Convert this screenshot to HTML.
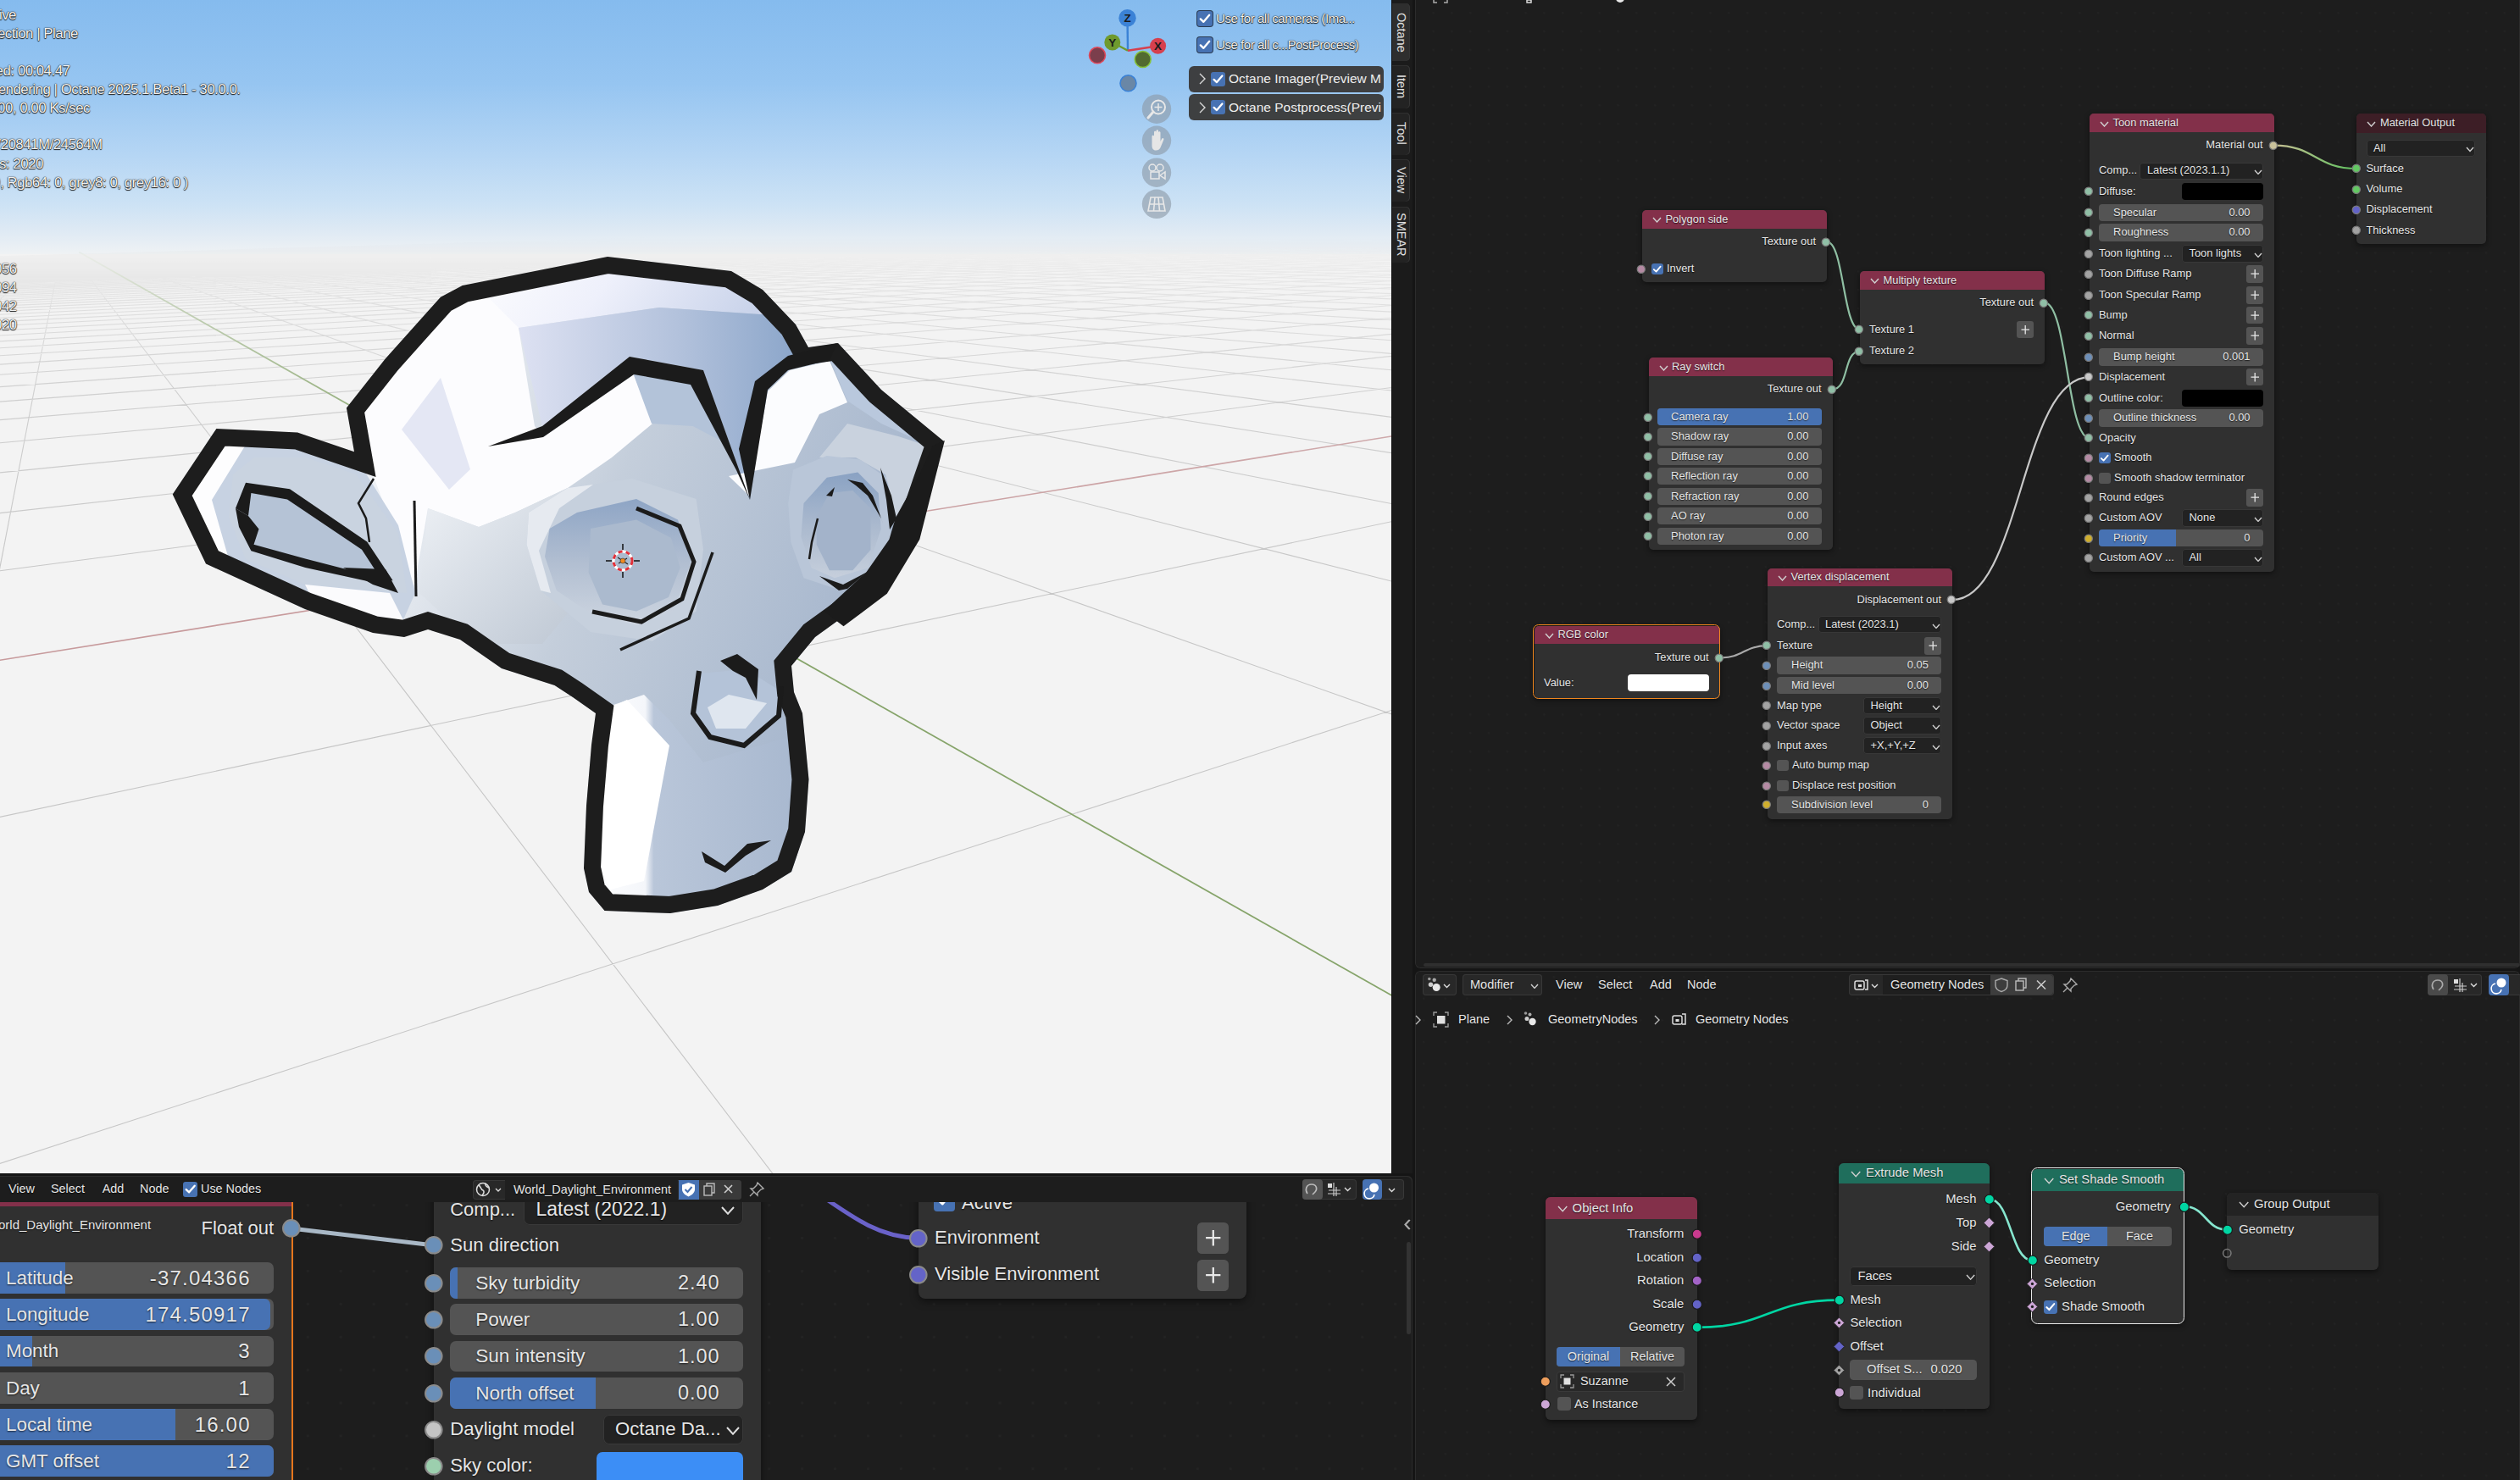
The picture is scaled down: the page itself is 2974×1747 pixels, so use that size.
<!DOCTYPE html><html><head><meta charset="utf-8"><style>
html,body{margin:0;padding:0;width:2974px;height:1747px;overflow:hidden;background:#151515;font-family:'Liberation Sans', sans-serif}
</style></head><body>
<div id="vp" style="position:absolute;left:0;top:0;width:1642px;height:1385px;overflow:hidden;background:#f3f3f3"><svg width="1642" height="1385" viewBox="0 0 1642 1385" style="position:absolute;left:0;top:0"><defs>
<linearGradient id="sky" gradientUnits="userSpaceOnUse" x1="0" y1="0" x2="0" y2="300">
 <stop offset="0" stop-color="#85bbee"/>
 <stop offset="0.33" stop-color="#96c5f1"/>
 <stop offset="0.6" stop-color="#b4d5f4"/>
 <stop offset="0.8" stop-color="#cce2f5"/>
 <stop offset="0.9" stop-color="#dde9f4"/>
 <stop offset="1" stop-color="#eff2f4"/>
</linearGradient>
<linearGradient id="gfade" gradientUnits="userSpaceOnUse" x1="0" y1="280" x2="0" y2="700">
 <stop offset="0" stop-color="#fff" stop-opacity="0"/>
 <stop offset="0.07" stop-color="#fff" stop-opacity="0.12"/>
 <stop offset="0.2" stop-color="#fff" stop-opacity="0.45"/>
 <stop offset="0.45" stop-color="#fff" stop-opacity="0.8"/>
 <stop offset="1" stop-color="#fff" stop-opacity="1"/>
</linearGradient>
<mask id="gmask"><rect x="0" y="0" width="1642" height="1385" fill="url(#gfade)"/></mask>
</defs><rect x="0" y="0" width="1642" height="1385" fill="#f3f3f3"/><rect x="0" y="0" width="1642" height="300" fill="url(#sky)"/><g mask="url(#gmask)"><path d="M-5977.2,604.9L-524.1,318.0M-5985.4,609.8L-505.9,317.5M-5994.1,615.1L-487.8,317.0M-5976.9,619.2L-469.9,316.5M-5985.8,625.0L-452.1,316.0M-5995.3,631.2L-434.5,315.4M-5976.5,636.2L-417.1,314.9M-5986.3,643.1L-399.8,314.4M-5996.8,650.6L-382.6,313.9M-5976.1,656.6L-365.6,313.5M-5986.9,665.1L-348.8,313.0M-5998.6,674.2L-332.1,312.5M-5975.6,681.7L-315.5,312.0M-5987.7,692.2L-299.1,311.5M-5962.4,701.0L-282.8,311.1M-5974.9,713.3L-266.6,310.6M-5988.6,726.8L-250.6,310.1M-5959.8,738.3L-234.7,309.7M-5974.0,754.3L-218.9,309.2M-5989.8,772.1L-203.3,308.8M-5956.4,787.7L-187.8,308.3M-5972.9,809.6L-172.4,307.9M-5991.5,834.2L-157.1,307.4M-5951.6,856.6L-142.0,307.0M-5971.2,888.1L-127.0,306.6M-5994.0,924.7L-112.1,306.1M-5944.5,959.1L-97.3,305.7M-5968.7,1008.6L-82.6,305.3M-5997.9,1068.4L-68.1,304.9M-5932.8,1127.8L-53.6,304.5M-5964.3,1217.0L-39.3,304.0M-5877.7,1310.4L-25.1,303.6M-5909.9,1457.9L-11.0,303.2M-5954.9,1664.6L3.0,302.8M-5806.4,1915.5L16.8,302.4M-5845.1,2391.7L30.6,302.0M-5920.2,3317.3L44.3,301.6M-5413.4,5248.1L57.8,301.2M-1322.2,7501.8L71.3,300.8M5305.0,7146.5L84.7,300.5M7774.1,3018.6L111.1,299.7M7757.7,2243.9L124.1,299.3M7748.2,1793.9L137.1,298.9M7742.0,1499.8L150.0,298.6M7963.4,1322.3L162.7,298.2M7930.3,1160.5L175.4,297.8M7904.9,1036.5L188.0,297.5M7299.8,889.6L200.5,297.1M6661.3,770.2L212.9,296.8M6211.0,686.0L225.2,296.4M5876.3,623.4L237.4,296.1M5617.8,575.1L249.6,295.7M5412.2,536.7L261.6,295.4M5244.7,505.3L273.6,295.0M5105.6,479.3L285.5,294.7M4988.2,457.4L297.2,294.3M4887.9,438.6L309.0,294.0M4801.2,422.4L320.6,293.7M4725.4,408.3L332.1,293.3M4658.7,395.8L343.6,293.0M4599.5,384.7L355.0,292.7M4546.5,374.8L366.3,292.3M4499.0,365.9L377.5,292.0M4456.0,357.9L388.6,291.7M4416.9,350.6L399.7,291.4M4381.3,343.9L410.7,291.0M4348.7,337.8L421.6,290.7M4318.7,332.2L432.5,290.4M4291.0,327.0L443.2,290.1M4265.4,322.3L453.9,289.8M4241.7,317.8L464.6,289.5M4219.5,313.7L475.1,289.2M4198.9,309.8L485.6,288.9M4179.6,306.2L496.0,288.6M4161.6,302.8L506.4,288.3M4144.6,299.7L516.7,288.0M4128.6,296.7L526.9,287.7M4113.6,293.9L537.0,287.4M4099.4,291.2L547.1,287.1M4086.0,288.7L557.1,286.8M4073.2,286.3L567.0,286.5M4061.2,284.1L576.9,286.3M4049.7,281.9L586.7,286.0M4038.8,279.9L596.5,285.7M4028.4,278.0L606.2,285.4M4018.6,276.1L615.8,285.1M4009.1,274.3L625.4,284.9M4000.1,272.7L634.9,284.6M3991.5,271.0L644.3,284.3M3983.2,269.5L653.7,284.0M3975.3,268.0L663.0,283.8M3967.7,266.6L672.3,283.5M3960.4,265.2L681.5,283.2M3953.5,263.9L690.6,283.0M3946.7,262.7L699.7,282.7M3940.3,261.5L708.8,282.4M3934.0,260.3L717.7,282.2M3928.0,259.2L726.7,281.9M3922.2,258.1L735.5,281.7M3916.7,257.1L744.4,281.4M3911.3,256.0L753.1,281.2M3906.1,255.1L761.8,280.9M3901.0,254.1L770.5,280.7M3896.2,253.2L779.1,280.4M3891.5,252.3L787.6,280.2M3886.9,251.5L796.1,279.9M3882.5,250.7L804.6,279.7M3878.2,249.9L813.0,279.4M3874.1,249.1L821.3,279.2M3870.0,248.3L829.6,279.0M3866.1,247.6L837.9,278.7M3862.3,246.9L846.1,278.5M3858.7,246.2L854.2,278.2M3855.1,245.5L862.3,278.0M3851.6,244.9L870.4,277.8M3848.2,244.3L878.4,277.6M3844.9,243.6L886.3,277.3M3841.7,243.0L894.3,277.1M3838.6,242.5L902.1,276.9M-1414.3,343.7L1416.7,262.0M-1431.6,344.4L1423.4,261.9M-1449.3,345.1L1430.2,261.8M-1467.5,345.8L1437.1,261.6M-1486.1,346.5L1444.1,261.5M-1505.1,347.2L1451.2,261.4M-1524.6,348.0L1458.3,261.3M-1544.6,348.7L1465.5,261.1M-1565.1,349.5L1472.7,261.0M-1586.1,350.3L1480.1,260.9M-1607.7,351.2L1487.5,260.7M-1629.8,352.0L1495.0,260.6M-1652.5,352.9L1502.6,260.4M-1675.8,353.8L1510.2,260.3M-1699.8,354.7L1518.0,260.2M-1724.5,355.6L1525.8,260.0M-1749.8,356.6L1533.7,259.9M-1775.9,357.6L1541.7,259.7M-1802.7,358.6L1549.8,259.6M-1830.3,359.7L1558.0,259.4M-1858.7,360.8L1566.2,259.3M-1888.0,361.9L1574.6,259.1M-1918.2,363.1L1583.1,259.0M-1949.3,364.3L1591.6,258.8M-1981.4,365.5L1600.2,258.7M-2014.6,366.8L1609.0,258.5M-2048.9,368.1L1617.8,258.3M-2084.2,369.5L1626.8,258.2M-2120.8,370.9L1635.8,258.0M-2158.7,372.3L1645.0,257.8M-2197.9,373.8L1654.3,257.7M-2238.4,375.4L1663.6,257.5M-2280.5,377.0L1673.1,257.3M-2324.1,378.7L1682.7,257.1M-2369.4,380.4L1692.5,257.0M-2416.4,382.2L1702.3,256.8M-2465.2,384.1L1712.3,256.6M-2516.0,386.0L1722.3,256.4M-2568.9,388.1L1732.5,256.2M-2624.0,390.2L1742.9,256.0M-2681.4,392.4L1753.3,255.9M-2741.3,394.7L1763.9,255.7M-2803.9,397.1L1774.7,255.5M-2869.3,399.6L1785.5,255.3M-2937.8,402.2L1796.5,255.1M-3009.5,405.0L1807.7,254.9M-3084.7,407.9L1819.0,254.7M-3163.7,410.9L1830.4,254.4M-3246.8,414.1L1842.0,254.2M-3334.2,417.5L1853.8,254.0M-3426.4,421.0L1865.7,253.8M-3523.6,424.7L1877.7,253.6M-3626.4,428.7L1890.0,253.4M-3735.3,432.9L1902.3,253.1M-3850.8,437.3L1914.9,252.9M-3973.5,442.0L1927.6,252.7M-4104.1,447.0L1940.6,252.4M-4243.5,452.4L1953.7,252.2M-4392.4,458.1L1966.9,251.9M-4552.0,464.2L1980.4,251.7M-4723.4,470.8L1994.1,251.5M-4908.0,477.9L2007.9,251.2M-5107.4,485.6L2022.0,250.9M-5323.4,493.9L2036.3,250.7M-5558.2,502.9L2050.8,250.4M-5814.4,512.7L2065.5,250.1M-5966.6,519.2L2080.4,249.9M-5997.8,521.7L2095.5,249.6M-5986.3,522.8L2110.9,249.3M-5974.3,524.0L2126.5,249.0M-5962.0,525.2L2142.3,248.7M-5995.5,528.0L2158.4,248.4M-5983.0,529.4L2174.8,248.1M-5970.1,530.7L2191.4,247.8M-5956.7,532.2L2208.3,247.5M-5992.8,535.4L2225.4,247.2M-5979.3,537.0L2242.8,246.9M-5965.2,538.6L2260.5,246.6M-5950.5,540.3L2278.5,246.3M-5989.7,544.1L2296.8,245.9M-5974.8,546.0L2315.4,245.6M-5959.3,548.0L2334.3,245.2M-5943.1,550.0L2353.6,244.9M-5985.9,554.4L2373.1,244.5M-5969.5,556.8L2393.0,244.2M-5952.3,559.2L2413.3,243.8M-5998.8,564.3L2433.9,243.4M-5981.4,567.1L2454.9,243.0M-5963.0,570.0L2476.2,242.6M-5943.6,573.1L2498.0,242.2M-5995.4,579.2L2520.1,241.8M-5975.7,582.8L2542.6,241.4M-5954.8,586.5L2565.6,241.0M-5932.7,590.5L2589.0,240.6M-5991.0,598.2L2612.8,240.1M-5968.4,602.8L2637.1,239.7M-5944.3,607.8L2661.9,239.2M-5918.5,613.1L2687.1,238.8M-5985.2,623.0L2712.9,238.3M-5958.8,629.4L2739.1,237.8M-5930.3,636.2L2765.9,237.3M-5899.4,643.6L2793.2,236.8M-5977.3,657.0L2821.1,236.3M-5945.5,666.1L2849.6,235.8M-5910.6,676.0L2878.6,235.3M-5872.3,687.0L2908.3,234.7M-5965.9,706.2L2938.6,234.2M-5925.8,720.2L2969.6,233.6M-5881.0,735.9L3001.2,233.0M-5994.9,763.1L3033.6,232.4M-5947.9,784.1L3066.7,231.8M-5894.0,808.2L3100.5,231.2M-5831.6,836.0L3135.1,230.6M-5982.5,884.6L3170.4,229.9M-5915.0,925.8L3206.6,229.3M-5833.2,975.8L3243.7,228.6M-5732.0,1037.6L3281.7,227.9M-5955.3,1151.0L3320.6,227.2M-5836.6,1264.0L3360.4,226.5M-5671.8,1420.9L3401.2,225.7M-5847.5,2205.9L3486.0,224.2M-5403.0,3133.6L3530.0,223.4M-3956.9,6151.2L3575.2,222.5" stroke="#c6c6c6" stroke-width="1.1" fill="none"/><path d="M-5427.9,1653.1L3443.1,225.0" stroke="#c79a9c" stroke-width="1.6" fill="none"/><path d="M7410.6,4442.4L93.3,297.5" stroke="#86a46a" stroke-width="1.8" fill="none"/></g><defs><clipPath id="mclip"><polygon points="717,303 863,320 900,342 939,383 954,410 989,405 1040,460 1114,521 1097,570 1080,620 1071,645 1045,692 962,752 934,786 937,817 947,842 954.5,920 950,982 934,1029 900,1050 847,1069 791,1078 713.5,1075 695,1053 689,1025 692,951 698,879 703,842 676,823 654.5,809 592,789 543,755 505,743 477,752 440,747 360,719 243,665.5 203.7,583.4 255.4,505.9 351.1,510.4 418,533.2 408.9,481.5 454.5,423.8 519.9,350.8 545.7,337.1"/></clipPath><linearGradient id="mface" gradientUnits="userSpaceOnUse" x1="480" y1="520" x2="1060" y2="760">
<stop offset="0" stop-color="#eef1f5"/><stop offset="0.4" stop-color="#c4cedb"/><stop offset="1" stop-color="#a2b3cb"/></linearGradient>
<linearGradient id="mtop" x1="0" y1="0" x2="1" y2="0.2">
<stop offset="0" stop-color="#ffffff"/><stop offset="0.5" stop-color="#eef0fb"/><stop offset="1" stop-color="#c9d3ea"/></linearGradient>
<linearGradient id="mband" x1="0" y1="0" x2="1" y2="0">
<stop offset="0" stop-color="#dde1f2"/><stop offset="0.5" stop-color="#b3c2dc"/><stop offset="1" stop-color="#7f9dc4"/></linearGradient>
<linearGradient id="mchin" x1="0" y1="0" x2="1" y2="0">
<stop offset="0" stop-color="#ffffff"/><stop offset="0.28" stop-color="#f4f6fa"/><stop offset="0.32" stop-color="#b9c6d9"/><stop offset="1" stop-color="#a8b8cf"/></linearGradient>
<linearGradient id="meye" x1="0" y1="0" x2="0" y2="1"><stop offset="0" stop-color="#8ea5c5"/><stop offset="0.5" stop-color="#b1bed1"/><stop offset="1" stop-color="#cdd5e0"/></linearGradient>
<linearGradient id="meye2" x1="0" y1="0" x2="0" y2="1"><stop offset="0" stop-color="#8aa2c3"/><stop offset="0.5" stop-color="#aab9ce"/><stop offset="1" stop-color="#c6cfdc"/></linearGradient>
<linearGradient id="mcheek" gradientUnits="userSpaceOnUse" x1="510" y1="600" x2="690" y2="790">
<stop offset="0" stop-color="#e9edf2"/><stop offset="1" stop-color="#b9c3d0"/></linearGradient>
</defs><g clip-path="url(#mclip)"><polygon points="717,303 863,320 900,342 939,383 954,410 989,405 1040,460 1114,521 1097,570 1080,620 1071,645 1045,692 962,752 934,786 937,817 947,842 954.5,920 950,982 934,1029 900,1050 847,1069 791,1078 713.5,1075 695,1053 689,1025 692,951 698,879 703,842 676,823 654.5,809 592,789 543,755 505,743 477,752 440,747 360,719 243,665.5 203.7,583.4 255.4,505.9 351.1,510.4 418,533.2 408.9,481.5 454.5,423.8 519.9,350.8 545.7,337.1" fill="url(#mface)"/><polygon points="530,330 717,318 863,333 912,372 778,363 612,387 560,420" fill="url(#mtop)"/><polygon points="425,500 454,424 520,351 560,335 612,387 631,503 641,516 748,442 770,500 722,540 670,576 608,605 565,622 505,600 489,692 470,640 440,560" fill="#fcfcfe"/><polygon points="520,446 555,554 530,578 474,507" fill="#e4e7f4"/><polygon points="505,600 565,622 608,605 670,576 700,600 690,700 640,760 560,760 495,700" fill="url(#mcheek)"/><polygon points="747.7,442 830,450 850,520 817.7,503 769,500" fill="#b3c3d9"/><polygon points="612,387 778,363 912,372 942,425 985,412 930,437 906,460 885,590 830,437 743,421 640,503" fill="url(#mband)"/><polygon points="906,462 932,437 979,426 1000,475 967,489 938,546 860,562 884,585" fill="#fbfcfe"/><polygon points="980,425 1000,473 1040,500 1095,525 1040,462" fill="#b9c8dd"/><polygon points="700,840 760,820 790,850 830,900 930,870 945,950 940,1030 860,1060 720,1065 690,1000" fill="url(#mchin)"/><polygon points="710,840 740,826 790,880 760,1040 720,1050 700,1000" fill="#ffffff"/><polygon points="210,580 262,510 350,515 420,540 470,620 490,700 470,745 360,720 245,665" fill="#c7d2e2"/><polygon points="222,585 262,520 290,525 250,590 270,660 245,655" fill="#fdfdfe"/><polygon points="275,560 300,540 360,540 420,560 470,630 480,700 360,690 290,660 270,610" fill="#c9d3e0"/><polygon points="285,590 300,576 340,584 430,645 455,686 360,664 300,645" fill="#b5c3d6"/><polygon points="360,690 460,700 480,740 380,730" fill="#fbfbfd"/><polygon points="624,605 670,576 746,565 821.6,589 830,648.6 821.6,721.6 770,756.8 697,746 638,697 621.6,643" fill="#c6d0dd"/><polygon points="624,605 670,576 700,572 660,600 636,650 650,700 638,697 621.6,643" fill="#e6eaf0"/><polygon points="648.6,624 681,605 751,589 800,613.5 816,662 794.6,721.6 751,738 697,724 656.8,697 643,657" fill="url(#meye)"/><polygon points="697,624 751,613.5 792,635 802.7,670 789,705 751,721.6 711,713.5 694.6,675.7" fill="#abbace"/><polygon points="1000,500 1060,515 1100,528 1080,580 1058,612 1045,560 1010,540 967,540" fill="#c9d2de"/><polygon points="936,554.6 975.8,537.9 1015,542.4 1045.8,563.7 1051.9,639.8 1030.6,682.3 985,694.5 948.5,682.3 933.3,639.8 930.2,594" fill="#b9c6d8"/><polygon points="948.5,594 975.8,563.7 1012.3,557.6 1036.7,582 1039.7,624.6 1024.5,670.2 985,682.3 957.6,670.2 945.4,633.7" fill="url(#meye2)"/><polygon points="963.7,609.3 978.9,582 1006.3,579 1027.5,600.2 1027.5,648.9 1006.3,673.2 978.9,673.2 963.7,642.8" fill="#a3b3ca"/><polygon points="825,795 880,790 920,815 918,845 878,878 838,868 818,842" fill="#b4c3d8"/><polygon points="835,835 860,820 905,830 880,860 845,860" fill="#dfe6ef"/><polygon points="717,303 863,320 900,342 939,383 954,410 989,405 1040,460 1114,521 1097,570 1080,620 1071,645 1045,692 962,752 934,786 937,817 947,842 954.5,920 950,982 934,1029 900,1050 847,1069 791,1078 713.5,1075 695,1053 689,1025 692,951 698,879 703,842 676,823 654.5,809 592,789 543,755 505,743 477,752 440,747 360,719 243,665.5 203.7,583.4 255.4,505.9 351.1,510.4 418,533.2 408.9,481.5 454.5,423.8 519.9,350.8 545.7,337.1" fill="none" stroke="#1d1d1d" stroke-width="40" stroke-linejoin="miter" stroke-miterlimit="3"/></g><polygon points="576,527 640,503 743,421 830,437 885,590 869,555 815,454 748,442 641,516" fill="#1b1b1b"/><polygon points="885,590 872,530 891,450 930,420 988,405 979,425 930,437 906,460" fill="#1b1b1b"/><polyline points="751,600 802,621 819,663 805,707 757,734 699,722" fill="none" stroke="#1b1b1b" stroke-width="5"/><polyline points="841,652 813,730 732,767" fill="none" stroke="#1b1b1b" stroke-width="3.5"/><polygon points="1100.7,526.3 1114.9,519.9 1085.3,636.7 1046.8,700.8 995.5,739.3 972.4,721.4 1022.5,675.2 1049.4,636.7 1057,611 1085.3,559.7" fill="#1b1b1b"/><polygon points="1039,552 1052,585 1058,612 1050,625 1046,590" fill="#1b1b1b"/><polygon points="1000,566 1018,570 1030,585 1043,620 1040,612 1024,585 1010,573" fill="#1b1b1b"/><polygon points="967,680 995,690 1023.7,675 1000,695 990,697" fill="#1b1b1b"/><polyline points="965,612 958,640 955,660" fill="none" stroke="#1b1b1b" stroke-width="2.5"/><polygon points="975,585 985,575 982,586" fill="#1b1b1b"/><polyline points="825,792 818,842 838,870 878,880 919,845 922,810" fill="none" stroke="#1b1b1b" stroke-width="6"/><polygon points="850,780 870,772 895,790 893,826 880,800 865,792" fill="#1b1b1b"/><polygon points="828,1005 855,1022 882,996 910,992 880,1010 856,1030 832,1018" fill="#1b1b1b"/><polygon points="278,600 290,569.7 342,577.3 433.2,639.6 463.6,685.3 450,684 427,648.8 339,589.5 296.4,581.9 293,609" fill="#1b1b1b"/><polygon points="278,600 293,609 305.5,624.4 299.5,642.7 360.3,659.4 448.4,682.2 463.6,690 457.6,691.3 360.3,670 296.4,650.3 282,622" fill="#1b1b1b"/><polyline points="441,565 423,594 432,612 436,640" fill="none" stroke="#1b1b1b" stroke-width="2.5"/><polygon points="405,670 455,672 470,700 440,690" fill="#1b1b1b"/><polyline points="489,591 491,704" fill="none" stroke="#1b1b1b" stroke-width="3"/><polyline points="652,809 700,830 760,838" fill="none" stroke="#1b1b1b" stroke-width="0"/><circle cx="735" cy="662" r="11" fill="none" stroke="#fff" stroke-width="3"/><circle cx="735" cy="662" r="11" fill="none" stroke="#e0303a" stroke-width="3" stroke-dasharray="5 4.2"/><path d="M715,662H722M748,662H755M735,642V649M735,675V682" stroke="#111" stroke-width="1.5"/><path d="M729,658L741,666M730,665L740,659" stroke="#222" stroke-width="1.2"/><circle cx="735" cy="662" r="3" fill="#f08a20" stroke="#333" stroke-width="0.6"/><line x1="1331" y1="59.8" x2="1330.5" y2="21.3" stroke="#3b82d6" stroke-width="2.4"/><line x1="1331" y1="59.8" x2="1312.8" y2="50" stroke="#6f9a2e" stroke-width="2.4"/><line x1="1331" y1="59.8" x2="1366.6" y2="54.3" stroke="#d6404e" stroke-width="2.4"/><circle cx="1295" cy="65.3" r="9.5" fill="#7b3e4c" stroke="#e0485a" stroke-width="1.6"/><circle cx="1348.7" cy="70" r="9.5" fill="#526a30" stroke="#86c23a" stroke-width="1.6"/><circle cx="1331.5" cy="98.3" r="9.5" fill="#6a87a6" stroke="#3b82d6" stroke-width="1.6"/><circle cx="1330.5" cy="21.3" r="10.2" fill="#3b82d6"/><circle cx="1312.8" cy="50" r="9.5" fill="#6f9a2e"/><circle cx="1366.6" cy="54.3" r="9.5" fill="#d6404e"/><text x="1330.5" y="26.3" text-anchor="middle" font-family="'Liberation Sans', sans-serif" font-size="13.5" font-weight="bold" fill="#1a1a1a">Z</text><text x="1312.8" y="55" text-anchor="middle" font-family="'Liberation Sans', sans-serif" font-size="13.5" font-weight="bold" fill="#1a1a1a">Y</text><text x="1366.6" y="59.3" text-anchor="middle" font-family="'Liberation Sans', sans-serif" font-size="13.5" font-weight="bold" fill="#1a1a1a">X</text><circle cx="1365" cy="128.7" r="17.2" fill="#8c9aa6" fill-opacity="0.62"/><circle cx="1365" cy="165.8" r="17.2" fill="#8c9aa6" fill-opacity="0.62"/><circle cx="1365" cy="203.7" r="17.2" fill="#8c9aa6" fill-opacity="0.62"/><circle cx="1365" cy="240.8" r="17.2" fill="#8c9aa6" fill-opacity="0.62"/><circle cx="1367" cy="126.5" r="8" fill="none" stroke="#e8e8e8" stroke-width="2"/><path d="M1361,132 L1355,139" stroke="#e8e8e8" stroke-width="3" stroke-linecap="round"/><path d="M1367,122V131M1362.5,126.5H1371.5" stroke="#e8e8e8" stroke-width="1.5"/><path d="M1359.5,170 V161 C1359.5,159.3 1362,159.3 1362,161 V167 V156 C1362,154.3 1364.5,154.3 1364.5,156 V166 V154.5 C1364.5,152.8 1367,152.8 1367,154.5 V166 V156.5 C1367,154.8 1369.5,154.8 1369.5,156.5 V167 L1371,164 C1372,162.3 1374,163.3 1373.3,165 L1370,173 C1369,176 1367,177.5 1364,177.5 C1361,177.5 1359.5,175 1359.5,172 Z" fill="#e6e6e6"/><circle cx="1360" cy="198" r="4" fill="none" stroke="#e8e8e8" stroke-width="1.5"/><circle cx="1369" cy="198" r="4" fill="none" stroke="#e8e8e8" stroke-width="1.5"/><rect x="1358" y="203" width="10" height="8" fill="none" stroke="#e8e8e8" stroke-width="1.5"/><path d="M1369,207 L1375,203 V211Z" fill="none" stroke="#e8e8e8" stroke-width="1.5"/><path d="M1358,233 H1372 L1375,249 H1355 Z M1356.5,241 H1373.5 M1363,233 L1361.5,249 M1367,233 L1368.5,249" fill="none" stroke="#e8e8e8" stroke-width="1.6"/></svg><div style="position:absolute;white-space:nowrap;font-family:'Liberation Sans', sans-serif;font-size:16.8px;letter-spacing:-0.45px;color:#f2f2f2;text-shadow:0 0 1px #1a1a1a,0 0 1.5px #1a1a1a,0 1px 1px #222;right:1623px;top:8px;line-height:20px">Octane | Interactive</div><div style="position:absolute;white-space:nowrap;font-family:'Liberation Sans', sans-serif;font-size:16.8px;letter-spacing:-0.45px;color:#f2f2f2;text-shadow:0 0 1px #1a1a1a,0 0 1.5px #1a1a1a,0 1px 1px #222;right:1550px;top:29.700000000000003px;line-height:20px">Scene Collection | Plane</div><div style="position:absolute;white-space:nowrap;font-family:'Liberation Sans', sans-serif;font-size:16.8px;letter-spacing:-0.45px;color:#f2f2f2;text-shadow:0 0 1px #1a1a1a,0 0 1.5px #1a1a1a,0 1px 1px #222;right:1559.5px;top:73.5px;line-height:20px">Elapsed: 00:04.47</div><div style="position:absolute;white-space:nowrap;font-family:'Liberation Sans', sans-serif;font-size:16.8px;letter-spacing:-0.45px;color:#f2f2f2;text-shadow:0 0 1px #1a1a1a,0 0 1.5px #1a1a1a,0 1px 1px #222;right:1358.5px;top:95.7px;line-height:20px">Rendering | Octane 2025.1.Beta1 - 30.0.0.</div><div style="position:absolute;white-space:nowrap;font-family:'Liberation Sans', sans-serif;font-size:16.8px;letter-spacing:-0.45px;color:#f2f2f2;text-shadow:0 0 1px #1a1a1a,0 0 1.5px #1a1a1a,0 1px 1px #222;right:1536px;top:118px;line-height:20px">Samples: 500/500, 0.00 Ks/sec</div><div style="position:absolute;white-space:nowrap;font-family:'Liberation Sans', sans-serif;font-size:16.8px;letter-spacing:-0.45px;color:#f2f2f2;text-shadow:0 0 1px #1a1a1a,0 0 1.5px #1a1a1a,0 1px 1px #222;right:1521.4px;top:161.4px;line-height:20px">GPU: 1/20841M/24564M</div><div style="position:absolute;white-space:nowrap;font-family:'Liberation Sans', sans-serif;font-size:16.8px;letter-spacing:-0.45px;color:#f2f2f2;text-shadow:0 0 1px #1a1a1a,0 0 1.5px #1a1a1a,0 1px 1px #222;right:1591.2px;top:183.7px;line-height:20px">Triangles: 2020</div><div style="position:absolute;white-space:nowrap;font-family:'Liberation Sans', sans-serif;font-size:16.8px;letter-spacing:-0.45px;color:#f2f2f2;text-shadow:0 0 1px #1a1a1a,0 0 1.5px #1a1a1a,0 1px 1px #222;right:1420px;top:206px;line-height:20px">Textures: ( Rgba32: 0, Rgb64: 0, grey8: 0, grey16: 0 )</div><div style="position:absolute;white-space:nowrap;font-family:'Liberation Sans', sans-serif;font-size:16.8px;letter-spacing:-0.45px;color:#f2f2f2;text-shadow:0 0 1px #1a1a1a,0 0 1.5px #1a1a1a,0 1px 1px #222;right:1622.3px;top:307.5px;line-height:20px">Objects 1056</div><div style="position:absolute;white-space:nowrap;font-family:'Liberation Sans', sans-serif;font-size:16.8px;letter-spacing:-0.45px;color:#f2f2f2;text-shadow:0 0 1px #1a1a1a,0 0 1.5px #1a1a1a,0 1px 1px #222;right:1622.3px;top:329.7px;line-height:20px">Vertices 1094</div><div style="position:absolute;white-space:nowrap;font-family:'Liberation Sans', sans-serif;font-size:16.8px;letter-spacing:-0.45px;color:#f2f2f2;text-shadow:0 0 1px #1a1a1a,0 0 1.5px #1a1a1a,0 1px 1px #222;right:1622.3px;top:351.9px;line-height:20px">Edges 2042</div><div style="position:absolute;white-space:nowrap;font-family:'Liberation Sans', sans-serif;font-size:16.8px;letter-spacing:-0.45px;color:#f2f2f2;text-shadow:0 0 1px #1a1a1a,0 0 1.5px #1a1a1a,0 1px 1px #222;right:1622.3px;top:373.5px;line-height:20px">Faces 1020</div><div style="position:absolute;left:1413px;top:13.3px;width:18px;height:18px;border-radius:3px;background:#4772b3;box-shadow:0 0 0 1px #2a3a50"></div><svg style="position:absolute;left:1413px;top:13.3px" width="18" height="18" viewBox="0 0 18 18"><path d="M3.8,9.4 L7.4,12.8 L14.2,4.8" fill="none" stroke="#fff" stroke-width="2.4" stroke-linecap="round" stroke-linejoin="round"/></svg><div style="position:absolute;white-space:nowrap;font-family:'Liberation Sans', sans-serif;font-size:16.8px;letter-spacing:-0.45px;color:#f2f2f2;text-shadow:0 0 1px #1a1a1a,0 0 1.5px #1a1a1a,0 1px 1px #222;font-size:15px;left:1435px;top:12.3px;line-height:20px">Use for all cameras (Ima...</div><div style="position:absolute;left:1413px;top:44.3px;width:18px;height:18px;border-radius:3px;background:#4772b3;box-shadow:0 0 0 1px #2a3a50"></div><svg style="position:absolute;left:1413px;top:44.3px" width="18" height="18" viewBox="0 0 18 18"><path d="M3.8,9.4 L7.4,12.8 L14.2,4.8" fill="none" stroke="#fff" stroke-width="2.4" stroke-linecap="round" stroke-linejoin="round"/></svg><div style="position:absolute;white-space:nowrap;font-family:'Liberation Sans', sans-serif;font-size:16.8px;letter-spacing:-0.45px;color:#f2f2f2;text-shadow:0 0 1px #1a1a1a,0 0 1.5px #1a1a1a,0 1px 1px #222;font-size:15px;left:1435px;top:43.3px;line-height:20px">Use for all c...PostProcess)</div><div style="position:absolute;left:1403px;top:78.1px;width:230px;height:30.5px;border-radius:6px;background:#3b3b3b;opacity:0.97"></div><svg style="position:absolute;left:1414px;top:86.3px" width="10" height="14"><path d="M2,1 L8,7 L2,13" fill="none" stroke="#d8d8d8" stroke-width="1.4"/></svg><div style="position:absolute;left:1429px;top:84.8px;width:17px;height:17px;border-radius:3px;background:#4772b3"></div><svg style="position:absolute;left:1429px;top:84.8px" width="17" height="17" viewBox="0 0 18 18"><path d="M3.8,9.4 L7.4,12.8 L14.2,4.8" fill="none" stroke="#fff" stroke-width="2.4" stroke-linecap="round" stroke-linejoin="round"/></svg><div style="position:absolute;left:1450px;top:83.3px;width:180px;overflow:hidden;white-space:nowrap;font-family:'Liberation Sans', sans-serif;font-size:15.5px;line-height:20px;color:#eee">Octane Imager(Preview Mo</div><div style="position:absolute;left:1403px;top:111.3px;width:230px;height:30.5px;border-radius:6px;background:#3b3b3b;opacity:0.97"></div><svg style="position:absolute;left:1414px;top:119.5px" width="10" height="14"><path d="M2,1 L8,7 L2,13" fill="none" stroke="#d8d8d8" stroke-width="1.4"/></svg><div style="position:absolute;left:1429px;top:118.0px;width:17px;height:17px;border-radius:3px;background:#4772b3"></div><svg style="position:absolute;left:1429px;top:118.0px" width="17" height="17" viewBox="0 0 18 18"><path d="M3.8,9.4 L7.4,12.8 L14.2,4.8" fill="none" stroke="#fff" stroke-width="2.4" stroke-linecap="round" stroke-linejoin="round"/></svg><div style="position:absolute;left:1450px;top:116.5px;width:180px;overflow:hidden;white-space:nowrap;font-family:'Liberation Sans', sans-serif;font-size:15.5px;line-height:20px;color:#eee">Octane Postprocess(Previe</div></div><div style="position:absolute;left:1642px;top:0;width:25px;height:1385px;background:#1b1b1b;border-left:1px solid #0c0c0c;box-sizing:border-box"></div><div style="position:absolute;left:1643px;top:4px;width:21px;height:68px;background:#2e2e2e;border-radius:0 5px 5px 0;box-shadow:inset -1px 0 0 #353535,inset 0 1px 0 #2f2f2f"></div><div style="position:absolute;left:1644px;top:4px;width:20px;height:68px;writing-mode:vertical-rl;text-align:center;font-family:'Liberation Sans', sans-serif;font-size:14.5px;line-height:20px;color:#e0e0e0;white-space:nowrap">Octane</div><div style="position:absolute;left:1643px;top:77px;width:21px;height:51px;background:#232323;border-radius:0 5px 5px 0;box-shadow:inset -1px 0 0 #353535,inset 0 1px 0 #2f2f2f"></div><div style="position:absolute;left:1644px;top:77px;width:20px;height:51px;writing-mode:vertical-rl;text-align:center;font-family:'Liberation Sans', sans-serif;font-size:14.5px;line-height:20px;color:#e0e0e0;white-space:nowrap">Item</div><div style="position:absolute;left:1643px;top:132.5px;width:21px;height:50.0px;background:#232323;border-radius:0 5px 5px 0;box-shadow:inset -1px 0 0 #353535,inset 0 1px 0 #2f2f2f"></div><div style="position:absolute;left:1644px;top:132.5px;width:20px;height:50.0px;writing-mode:vertical-rl;text-align:center;font-family:'Liberation Sans', sans-serif;font-size:14.5px;line-height:20px;color:#e0e0e0;white-space:nowrap">Tool</div><div style="position:absolute;left:1643px;top:188px;width:21px;height:50px;background:#232323;border-radius:0 5px 5px 0;box-shadow:inset -1px 0 0 #353535,inset 0 1px 0 #2f2f2f"></div><div style="position:absolute;left:1644px;top:188px;width:20px;height:50px;writing-mode:vertical-rl;text-align:center;font-family:'Liberation Sans', sans-serif;font-size:14.5px;line-height:20px;color:#e0e0e0;white-space:nowrap">View</div><div style="position:absolute;left:1643px;top:243.5px;width:21px;height:66.5px;background:#232323;border-radius:0 5px 5px 0;box-shadow:inset -1px 0 0 #353535,inset 0 1px 0 #2f2f2f"></div><div style="position:absolute;left:1644px;top:243.5px;width:20px;height:66.5px;writing-mode:vertical-rl;text-align:center;font-family:'Liberation Sans', sans-serif;font-size:14.5px;line-height:20px;color:#e0e0e0;white-space:nowrap">SMEAR</div><div style="position:absolute;left:1670px;top:-10px;width:1304px;height:1153px;background-color:#1d1d1d;border-radius:6px;box-shadow:inset 0 0 0 1px #2c2c2c;background-image:radial-gradient(circle at 1.2px 1.2px,#222222 1.1px,transparent 1.6px);background-size:21.8px 21.8px;background-position:20.4px 24px;overflow:hidden"></div><svg style="position:absolute;left:1690px;top:0" width="260" height="6"><path d="M2,0V3H6M14,3H18V0" stroke="#aaa" stroke-width="1.5" fill="none"/><rect x="112" y="0" width="5" height="3" fill="none" stroke="#ddd" stroke-width="1.5"/><circle cx="222" cy="-2" r="5" fill="#e8e8e8"/></svg><svg style="position:absolute;left:0;top:0" width="2974" height="1747"><defs><linearGradient id="lga" gradientUnits="userSpaceOnUse" x1="2683.6" y1="171.6" x2="2781.4" y2="199"><stop offset="0" stop-color="#c8bf94"/><stop offset="1" stop-color="#5fc35f"/></linearGradient></defs><path d="M2683.6,171.6 C2732.5,171.6 2732.5,199 2781.4,199" fill="none" stroke="url(#lga)" stroke-width="2.2"/><path d="M2156,285.3 C2176,285.3 2175,389.1 2195,389.1" fill="none" stroke="#8fbfa3" stroke-width="2.2"/><path d="M2162.5,459.5 C2182.5,459.5 2175,414.5 2195,414.5" fill="none" stroke="#8fbfa3" stroke-width="2.2"/><path d="M2413,357.3 C2439.5,357.3 2439.5,517.2 2466,517.2" fill="none" stroke="#8fbfa3" stroke-width="2.2"/><path d="M2304,708.2 C2385.0,708.2 2385.0,445.2 2466,445.2" fill="none" stroke="#c8c8c8" stroke-width="2.2"/><path d="M2029.6,776.5 C2057.8,776.5 2057.8,762.2 2086,762.2" fill="none" stroke="#a9a9a9" stroke-width="2.2"/></svg><div style="position:absolute;left:1938.0px;top:247.7px;width:218.0px;height:85.8px;background:#303030;border-radius:5px;box-shadow:0 2px 6px rgba(0,0,0,0.45);"></div><div style="position:absolute;left:1938.0px;top:247.7px;width:218.0px;height:22.3px;background:#83304a;border-radius:5px 5px 0 0"></div><svg style="position:absolute;left:1950.0px;top:256.4px" width="11.0" height="7.0"><path d="M1,1 L5.5,6.0 L10.0,1" fill="none" stroke="#d0d0d0" stroke-width="1.4"/></svg><div style="position:absolute;left:1965.5px;top:250.5px;line-height:16.8px;font-family:'Liberation Sans', sans-serif;font-size:12.9px;color:#e6e6e6;white-space:nowrap;text-shadow:0 1px 1.2px rgba(0,0,0,0.7);">Polygon side</div><div style="position:absolute;right:831.0px;top:276.9px;line-height:16.8px;font-family:'Liberation Sans', sans-serif;font-size:12.9px;color:#e6e6e6;white-space:nowrap;text-shadow:0 1px 1.2px rgba(0,0,0,0.7);">Texture out</div><svg style="position:absolute;left:2149.4px;top:279.5px" width="11.6" height="11.6"><circle cx="5.8" cy="5.8" r="4.6" fill="#90bfa6" stroke="#7d7d7d" stroke-width="1.2"/></svg><svg style="position:absolute;left:1931.4px;top:311.8px" width="11.6" height="11.6"><circle cx="5.8" cy="5.8" r="4.6" fill="#b48aa3" stroke="#7d7d7d" stroke-width="1.2"/></svg><div style="position:absolute;left:1949.0px;top:310.9px;width:13.5px;height:13.5px;background:#4772b3;border-radius:3px;"></div><svg style="position:absolute;left:1949px;top:310.85px" width="13.5" height="13.5" viewBox="0 0 18 18"><path d="M3.8,9.4 L7.4,12.8 L14.2,4.8" fill="none" stroke="#fff" stroke-width="2.4" stroke-linecap="round" stroke-linejoin="round"/></svg><div style="position:absolute;left:1967.0px;top:309.2px;line-height:16.8px;font-family:'Liberation Sans', sans-serif;font-size:12.9px;color:#e6e6e6;white-space:nowrap;text-shadow:0 1px 1.2px rgba(0,0,0,0.7);">Invert</div><div style="position:absolute;left:2195.0px;top:319.7px;width:218.0px;height:110.3px;background:#303030;border-radius:5px;box-shadow:0 2px 6px rgba(0,0,0,0.45);"></div><div style="position:absolute;left:2195.0px;top:319.7px;width:218.0px;height:22.3px;background:#83304a;border-radius:5px 5px 0 0"></div><svg style="position:absolute;left:2207.0px;top:328.4px" width="11.0" height="7.0"><path d="M1,1 L5.5,6.0 L10.0,1" fill="none" stroke="#d0d0d0" stroke-width="1.4"/></svg><div style="position:absolute;left:2222.5px;top:322.5px;line-height:16.8px;font-family:'Liberation Sans', sans-serif;font-size:12.9px;color:#e6e6e6;white-space:nowrap;text-shadow:0 1px 1.2px rgba(0,0,0,0.7);">Multiply texture</div><div style="position:absolute;right:574.0px;top:348.9px;line-height:16.8px;font-family:'Liberation Sans', sans-serif;font-size:12.9px;color:#e6e6e6;white-space:nowrap;text-shadow:0 1px 1.2px rgba(0,0,0,0.7);">Texture out</div><svg style="position:absolute;left:2406.4px;top:351.5px" width="11.6" height="11.6"><circle cx="5.8" cy="5.8" r="4.6" fill="#90bfa6" stroke="#7d7d7d" stroke-width="1.2"/></svg><svg style="position:absolute;left:2188.4px;top:383.3px" width="11.6" height="11.6"><circle cx="5.8" cy="5.8" r="4.6" fill="#90bfa6" stroke="#7d7d7d" stroke-width="1.2"/></svg><div style="position:absolute;left:2206.0px;top:380.7px;line-height:16.8px;font-family:'Liberation Sans', sans-serif;font-size:12.9px;color:#e6e6e6;white-space:nowrap;text-shadow:0 1px 1.2px rgba(0,0,0,0.7);">Texture 1</div><div style="position:absolute;left:2379.9px;top:378.9px;width:20.5px;height:20.5px;background:#545454;border-radius:3px;"></div><svg style="position:absolute;left:2379.9px;top:378.9px" width="20.5" height="20.5"><path d="M10.2,5.1V15.4M5.5,10.2H15.0" stroke="#e8e8e8" stroke-width="1.3"/></svg><svg style="position:absolute;left:2188.4px;top:408.7px" width="11.6" height="11.6"><circle cx="5.8" cy="5.8" r="4.6" fill="#90bfa6" stroke="#7d7d7d" stroke-width="1.2"/></svg><div style="position:absolute;left:2206.0px;top:406.1px;line-height:16.8px;font-family:'Liberation Sans', sans-serif;font-size:12.9px;color:#e6e6e6;white-space:nowrap;text-shadow:0 1px 1.2px rgba(0,0,0,0.7);">Texture 2</div><div style="position:absolute;left:1945.5px;top:422.0px;width:217.0px;height:226.5px;background:#303030;border-radius:5px;box-shadow:0 2px 6px rgba(0,0,0,0.45);"></div><div style="position:absolute;left:1945.5px;top:422.0px;width:217.0px;height:22.0px;background:#83304a;border-radius:5px 5px 0 0"></div><svg style="position:absolute;left:1957.5px;top:430.5px" width="11.0" height="7.0"><path d="M1,1 L5.5,6.0 L10.0,1" fill="none" stroke="#d0d0d0" stroke-width="1.4"/></svg><div style="position:absolute;left:1973.0px;top:424.6px;line-height:16.8px;font-family:'Liberation Sans', sans-serif;font-size:12.9px;color:#e6e6e6;white-space:nowrap;text-shadow:0 1px 1.2px rgba(0,0,0,0.7);">Ray switch</div><div style="position:absolute;right:824.5px;top:451.1px;line-height:16.8px;font-family:'Liberation Sans', sans-serif;font-size:12.9px;color:#e6e6e6;white-space:nowrap;text-shadow:0 1px 1.2px rgba(0,0,0,0.7);">Texture out</div><svg style="position:absolute;left:2155.9px;top:453.7px" width="11.6" height="11.6"><circle cx="5.8" cy="5.8" r="4.6" fill="#90bfa6" stroke="#7d7d7d" stroke-width="1.2"/></svg><svg style="position:absolute;left:1938.9px;top:486.5px" width="11.6" height="11.6"><circle cx="5.8" cy="5.8" r="4.6" fill="#90bfa6" stroke="#7d7d7d" stroke-width="1.2"/></svg><div style="position:absolute;left:1956.1px;top:482.1px;width:193.8px;height:20.4px;background:#545454;border-radius:4px;"></div><div style="position:absolute;left:1956.1px;top:482.1px;width:193.8px;height:20.4px;background:#4772b3;border-radius:4px"></div><div style="position:absolute;left:1972.1px;top:483.9px;line-height:16.8px;font-family:'Liberation Sans', sans-serif;font-size:12.9px;color:#e6e6e6;white-space:nowrap;text-shadow:0 1px 1.2px rgba(0,0,0,0.7);">Camera ray</div><div style="position:absolute;right:839.6px;top:483.9px;line-height:16.8px;font-family:'Liberation Sans', sans-serif;font-size:12.9px;color:#e6e6e6;white-space:nowrap;text-shadow:0 1px 1.2px rgba(0,0,0,0.7);">1.00</div><svg style="position:absolute;left:1938.9px;top:509.8px" width="11.6" height="11.6"><circle cx="5.8" cy="5.8" r="4.6" fill="#90bfa6" stroke="#7d7d7d" stroke-width="1.2"/></svg><div style="position:absolute;left:1956.1px;top:505.4px;width:193.8px;height:20.4px;background:#545454;border-radius:4px;"></div><div style="position:absolute;left:1972.1px;top:507.2px;line-height:16.8px;font-family:'Liberation Sans', sans-serif;font-size:12.9px;color:#e6e6e6;white-space:nowrap;text-shadow:0 1px 1.2px rgba(0,0,0,0.7);">Shadow ray</div><div style="position:absolute;right:839.6px;top:507.2px;line-height:16.8px;font-family:'Liberation Sans', sans-serif;font-size:12.9px;color:#e6e6e6;white-space:nowrap;text-shadow:0 1px 1.2px rgba(0,0,0,0.7);">0.00</div><svg style="position:absolute;left:1938.9px;top:533.1px" width="11.6" height="11.6"><circle cx="5.8" cy="5.8" r="4.6" fill="#90bfa6" stroke="#7d7d7d" stroke-width="1.2"/></svg><div style="position:absolute;left:1956.1px;top:528.7px;width:193.8px;height:20.4px;background:#545454;border-radius:4px;"></div><div style="position:absolute;left:1972.1px;top:530.5px;line-height:16.8px;font-family:'Liberation Sans', sans-serif;font-size:12.9px;color:#e6e6e6;white-space:nowrap;text-shadow:0 1px 1.2px rgba(0,0,0,0.7);">Diffuse ray</div><div style="position:absolute;right:839.6px;top:530.5px;line-height:16.8px;font-family:'Liberation Sans', sans-serif;font-size:12.9px;color:#e6e6e6;white-space:nowrap;text-shadow:0 1px 1.2px rgba(0,0,0,0.7);">0.00</div><svg style="position:absolute;left:1938.9px;top:556.4px" width="11.6" height="11.6"><circle cx="5.8" cy="5.8" r="4.6" fill="#90bfa6" stroke="#7d7d7d" stroke-width="1.2"/></svg><div style="position:absolute;left:1956.1px;top:552.0px;width:193.8px;height:20.4px;background:#545454;border-radius:4px;"></div><div style="position:absolute;left:1972.1px;top:553.8px;line-height:16.8px;font-family:'Liberation Sans', sans-serif;font-size:12.9px;color:#e6e6e6;white-space:nowrap;text-shadow:0 1px 1.2px rgba(0,0,0,0.7);">Reflection ray</div><div style="position:absolute;right:839.6px;top:553.8px;line-height:16.8px;font-family:'Liberation Sans', sans-serif;font-size:12.9px;color:#e6e6e6;white-space:nowrap;text-shadow:0 1px 1.2px rgba(0,0,0,0.7);">0.00</div><svg style="position:absolute;left:1938.9px;top:580.2px" width="11.6" height="11.6"><circle cx="5.8" cy="5.8" r="4.6" fill="#90bfa6" stroke="#7d7d7d" stroke-width="1.2"/></svg><div style="position:absolute;left:1956.1px;top:575.8px;width:193.8px;height:20.4px;background:#545454;border-radius:4px;"></div><div style="position:absolute;left:1972.1px;top:577.6px;line-height:16.8px;font-family:'Liberation Sans', sans-serif;font-size:12.9px;color:#e6e6e6;white-space:nowrap;text-shadow:0 1px 1.2px rgba(0,0,0,0.7);">Refraction ray</div><div style="position:absolute;right:839.6px;top:577.6px;line-height:16.8px;font-family:'Liberation Sans', sans-serif;font-size:12.9px;color:#e6e6e6;white-space:nowrap;text-shadow:0 1px 1.2px rgba(0,0,0,0.7);">0.00</div><svg style="position:absolute;left:1938.9px;top:603.5px" width="11.6" height="11.6"><circle cx="5.8" cy="5.8" r="4.6" fill="#90bfa6" stroke="#7d7d7d" stroke-width="1.2"/></svg><div style="position:absolute;left:1956.1px;top:599.1px;width:193.8px;height:20.4px;background:#545454;border-radius:4px;"></div><div style="position:absolute;left:1972.1px;top:600.9px;line-height:16.8px;font-family:'Liberation Sans', sans-serif;font-size:12.9px;color:#e6e6e6;white-space:nowrap;text-shadow:0 1px 1.2px rgba(0,0,0,0.7);">AO ray</div><div style="position:absolute;right:839.6px;top:600.9px;line-height:16.8px;font-family:'Liberation Sans', sans-serif;font-size:12.9px;color:#e6e6e6;white-space:nowrap;text-shadow:0 1px 1.2px rgba(0,0,0,0.7);">0.00</div><svg style="position:absolute;left:1938.9px;top:627.3px" width="11.6" height="11.6"><circle cx="5.8" cy="5.8" r="4.6" fill="#90bfa6" stroke="#7d7d7d" stroke-width="1.2"/></svg><div style="position:absolute;left:1956.1px;top:622.9px;width:193.8px;height:20.4px;background:#545454;border-radius:4px;"></div><div style="position:absolute;left:1972.1px;top:624.7px;line-height:16.8px;font-family:'Liberation Sans', sans-serif;font-size:12.9px;color:#e6e6e6;white-space:nowrap;text-shadow:0 1px 1.2px rgba(0,0,0,0.7);">Photon ray</div><div style="position:absolute;right:839.6px;top:624.7px;line-height:16.8px;font-family:'Liberation Sans', sans-serif;font-size:12.9px;color:#e6e6e6;white-space:nowrap;text-shadow:0 1px 1.2px rgba(0,0,0,0.7);">0.00</div><div style="position:absolute;left:2466.0px;top:134.2px;width:217.6px;height:540.8px;background:#303030;border-radius:5px;box-shadow:0 2px 6px rgba(0,0,0,0.45);"></div><div style="position:absolute;left:2466.0px;top:134.2px;width:217.6px;height:22.0px;background:#83304a;border-radius:5px 5px 0 0"></div><svg style="position:absolute;left:2478.0px;top:142.7px" width="11.0" height="7.0"><path d="M1,1 L5.5,6.0 L10.0,1" fill="none" stroke="#d0d0d0" stroke-width="1.4"/></svg><div style="position:absolute;left:2493.5px;top:136.8px;line-height:16.8px;font-family:'Liberation Sans', sans-serif;font-size:12.9px;color:#e6e6e6;white-space:nowrap;text-shadow:0 1px 1.2px rgba(0,0,0,0.7);">Toon material</div><div style="position:absolute;right:303.4px;top:163.2px;line-height:16.8px;font-family:'Liberation Sans', sans-serif;font-size:12.9px;color:#e6e6e6;white-space:nowrap;text-shadow:0 1px 1.2px rgba(0,0,0,0.7);">Material out</div><svg style="position:absolute;left:2677.0px;top:165.8px" width="11.6" height="11.6"><circle cx="5.8" cy="5.8" r="4.6" fill="#c9c19b" stroke="#7d7d7d" stroke-width="1.2"/></svg><div style="position:absolute;left:2477.0px;top:193.3px;line-height:16.8px;font-family:'Liberation Sans', sans-serif;font-size:12.9px;color:#e6e6e6;white-space:nowrap;text-shadow:0 1px 1.2px rgba(0,0,0,0.7);">Comp...</div><div style="position:absolute;left:2525.4px;top:191.5px;width:145.6px;height:20.4px;background:#222222;border-radius:4px;box-shadow:inset 0 0 0 1px #383838;"></div><div style="position:absolute;left:2533.9px;top:193.3px;line-height:16.8px;font-family:'Liberation Sans', sans-serif;font-size:12.9px;color:#e6e6e6;white-space:nowrap;text-shadow:0 1px 1.2px rgba(0,0,0,0.7);">Latest (2023.1.1)</div><svg style="position:absolute;left:2659.5px;top:200.0px" width="10.0" height="6.4"><path d="M1,1 L5.0,5.4 L9.0,1" fill="none" stroke="#d0d0d0" stroke-width="1.4"/></svg><svg style="position:absolute;left:2459.4px;top:220.2px" width="11.6" height="11.6"><circle cx="5.8" cy="5.8" r="4.6" fill="#90bfa6" stroke="#7d7d7d" stroke-width="1.2"/></svg><div style="position:absolute;left:2477.0px;top:217.6px;line-height:16.8px;font-family:'Liberation Sans', sans-serif;font-size:12.9px;color:#e6e6e6;white-space:nowrap;text-shadow:0 1px 1.2px rgba(0,0,0,0.7);">Diffuse:</div><div style="position:absolute;left:2575.0px;top:216.1px;width:96.0px;height:19.8px;background:#000000;border-radius:4px;"></div><svg style="position:absolute;left:2459.4px;top:245.1px" width="11.6" height="11.6"><circle cx="5.8" cy="5.8" r="4.6" fill="#90bfa6" stroke="#7d7d7d" stroke-width="1.2"/></svg><div style="position:absolute;left:2476.6px;top:240.7px;width:194.4px;height:20.4px;background:#545454;border-radius:4px;"></div><div style="position:absolute;left:2494.1px;top:242.5px;line-height:16.8px;font-family:'Liberation Sans', sans-serif;font-size:12.9px;color:#e6e6e6;white-space:nowrap;text-shadow:0 1px 1.2px rgba(0,0,0,0.7);">Specular</div><div style="position:absolute;right:318.5px;top:242.5px;line-height:16.8px;font-family:'Liberation Sans', sans-serif;font-size:12.9px;color:#e6e6e6;white-space:nowrap;text-shadow:0 1px 1.2px rgba(0,0,0,0.7);">0.00</div><svg style="position:absolute;left:2459.4px;top:268.6px" width="11.6" height="11.6"><circle cx="5.8" cy="5.8" r="4.6" fill="#90bfa6" stroke="#7d7d7d" stroke-width="1.2"/></svg><div style="position:absolute;left:2476.6px;top:264.2px;width:194.4px;height:20.4px;background:#545454;border-radius:4px;"></div><div style="position:absolute;left:2494.1px;top:266.0px;line-height:16.8px;font-family:'Liberation Sans', sans-serif;font-size:12.9px;color:#e6e6e6;white-space:nowrap;text-shadow:0 1px 1.2px rgba(0,0,0,0.7);">Roughness</div><div style="position:absolute;right:318.5px;top:266.0px;line-height:16.8px;font-family:'Liberation Sans', sans-serif;font-size:12.9px;color:#e6e6e6;white-space:nowrap;text-shadow:0 1px 1.2px rgba(0,0,0,0.7);">0.00</div><svg style="position:absolute;left:2459.4px;top:293.8px" width="11.6" height="11.6"><circle cx="5.8" cy="5.8" r="4.6" fill="#a3a3a3" stroke="#7d7d7d" stroke-width="1.2"/></svg><div style="position:absolute;left:2477.0px;top:291.2px;line-height:16.8px;font-family:'Liberation Sans', sans-serif;font-size:12.9px;color:#e6e6e6;white-space:nowrap;text-shadow:0 1px 1.2px rgba(0,0,0,0.7);">Toon lighting ...</div><div style="position:absolute;left:2575.0px;top:289.4px;width:96.0px;height:20.4px;background:#222222;border-radius:4px;box-shadow:inset 0 0 0 1px #383838;"></div><div style="position:absolute;left:2583.5px;top:291.2px;line-height:16.8px;font-family:'Liberation Sans', sans-serif;font-size:12.9px;color:#e6e6e6;white-space:nowrap;text-shadow:0 1px 1.2px rgba(0,0,0,0.7);">Toon lights</div><svg style="position:absolute;left:2659.5px;top:297.9px" width="10.0" height="6.4"><path d="M1,1 L5.0,5.4 L9.0,1" fill="none" stroke="#d0d0d0" stroke-width="1.4"/></svg><svg style="position:absolute;left:2459.4px;top:317.7px" width="11.6" height="11.6"><circle cx="5.8" cy="5.8" r="4.6" fill="#a3a3a3" stroke="#7d7d7d" stroke-width="1.2"/></svg><div style="position:absolute;left:2477.0px;top:315.1px;line-height:16.8px;font-family:'Liberation Sans', sans-serif;font-size:12.9px;color:#e6e6e6;white-space:nowrap;text-shadow:0 1px 1.2px rgba(0,0,0,0.7);">Toon Diffuse Ramp</div><div style="position:absolute;left:2650.5px;top:313.2px;width:20.5px;height:20.5px;background:#545454;border-radius:3px;"></div><svg style="position:absolute;left:2650.5px;top:313.2px" width="20.5" height="20.5"><path d="M10.2,5.1V15.4M5.5,10.2H15.0" stroke="#e8e8e8" stroke-width="1.3"/></svg><svg style="position:absolute;left:2459.4px;top:342.5px" width="11.6" height="11.6"><circle cx="5.8" cy="5.8" r="4.6" fill="#a3a3a3" stroke="#7d7d7d" stroke-width="1.2"/></svg><div style="position:absolute;left:2477.0px;top:339.9px;line-height:16.8px;font-family:'Liberation Sans', sans-serif;font-size:12.9px;color:#e6e6e6;white-space:nowrap;text-shadow:0 1px 1.2px rgba(0,0,0,0.7);">Toon Specular Ramp</div><div style="position:absolute;left:2650.5px;top:338.1px;width:20.5px;height:20.5px;background:#545454;border-radius:3px;"></div><svg style="position:absolute;left:2650.5px;top:338.1px" width="20.5" height="20.5"><path d="M10.2,5.1V15.4M5.5,10.2H15.0" stroke="#e8e8e8" stroke-width="1.3"/></svg><svg style="position:absolute;left:2459.4px;top:366.4px" width="11.6" height="11.6"><circle cx="5.8" cy="5.8" r="4.6" fill="#90bfa6" stroke="#7d7d7d" stroke-width="1.2"/></svg><div style="position:absolute;left:2477.0px;top:363.8px;line-height:16.8px;font-family:'Liberation Sans', sans-serif;font-size:12.9px;color:#e6e6e6;white-space:nowrap;text-shadow:0 1px 1.2px rgba(0,0,0,0.7);">Bump</div><div style="position:absolute;left:2650.5px;top:361.9px;width:20.5px;height:20.5px;background:#545454;border-radius:3px;"></div><svg style="position:absolute;left:2650.5px;top:361.9px" width="20.5" height="20.5"><path d="M10.2,5.1V15.4M5.5,10.2H15.0" stroke="#e8e8e8" stroke-width="1.3"/></svg><svg style="position:absolute;left:2459.4px;top:390.7px" width="11.6" height="11.6"><circle cx="5.8" cy="5.8" r="4.6" fill="#90bfa6" stroke="#7d7d7d" stroke-width="1.2"/></svg><div style="position:absolute;left:2477.0px;top:388.1px;line-height:16.8px;font-family:'Liberation Sans', sans-serif;font-size:12.9px;color:#e6e6e6;white-space:nowrap;text-shadow:0 1px 1.2px rgba(0,0,0,0.7);">Normal</div><div style="position:absolute;left:2650.5px;top:386.2px;width:20.5px;height:20.5px;background:#545454;border-radius:3px;"></div><svg style="position:absolute;left:2650.5px;top:386.2px" width="20.5" height="20.5"><path d="M10.2,5.1V15.4M5.5,10.2H15.0" stroke="#e8e8e8" stroke-width="1.3"/></svg><svg style="position:absolute;left:2459.4px;top:415.6px" width="11.6" height="11.6"><circle cx="5.8" cy="5.8" r="4.6" fill="#6d8fb8" stroke="#7d7d7d" stroke-width="1.2"/></svg><div style="position:absolute;left:2476.6px;top:411.2px;width:194.4px;height:20.4px;background:#545454;border-radius:4px;"></div><div style="position:absolute;left:2494.1px;top:413.0px;line-height:16.8px;font-family:'Liberation Sans', sans-serif;font-size:12.9px;color:#e6e6e6;white-space:nowrap;text-shadow:0 1px 1.2px rgba(0,0,0,0.7);">Bump height</div><div style="position:absolute;right:318.5px;top:413.0px;line-height:16.8px;font-family:'Liberation Sans', sans-serif;font-size:12.9px;color:#e6e6e6;white-space:nowrap;text-shadow:0 1px 1.2px rgba(0,0,0,0.7);">0.001</div><svg style="position:absolute;left:2459.4px;top:439.4px" width="11.6" height="11.6"><circle cx="5.8" cy="5.8" r="4.6" fill="#c8c8c8" stroke="#7d7d7d" stroke-width="1.2"/></svg><div style="position:absolute;left:2477.0px;top:436.8px;line-height:16.8px;font-family:'Liberation Sans', sans-serif;font-size:12.9px;color:#e6e6e6;white-space:nowrap;text-shadow:0 1px 1.2px rgba(0,0,0,0.7);">Displacement</div><div style="position:absolute;left:2650.5px;top:434.9px;width:20.5px;height:20.5px;background:#545454;border-radius:3px;"></div><svg style="position:absolute;left:2650.5px;top:434.9px" width="20.5" height="20.5"><path d="M10.2,5.1V15.4M5.5,10.2H15.0" stroke="#e8e8e8" stroke-width="1.3"/></svg><svg style="position:absolute;left:2459.4px;top:464.3px" width="11.6" height="11.6"><circle cx="5.8" cy="5.8" r="4.6" fill="#90bfa6" stroke="#7d7d7d" stroke-width="1.2"/></svg><div style="position:absolute;left:2477.0px;top:461.7px;line-height:16.8px;font-family:'Liberation Sans', sans-serif;font-size:12.9px;color:#e6e6e6;white-space:nowrap;text-shadow:0 1px 1.2px rgba(0,0,0,0.7);">Outline color:</div><div style="position:absolute;left:2575.0px;top:460.2px;width:96.0px;height:19.8px;background:#000000;border-radius:4px;"></div><svg style="position:absolute;left:2459.4px;top:487.6px" width="11.6" height="11.6"><circle cx="5.8" cy="5.8" r="4.6" fill="#6d8fb8" stroke="#7d7d7d" stroke-width="1.2"/></svg><div style="position:absolute;left:2476.6px;top:483.2px;width:194.4px;height:20.4px;background:#545454;border-radius:4px;"></div><div style="position:absolute;left:2494.1px;top:485.0px;line-height:16.8px;font-family:'Liberation Sans', sans-serif;font-size:12.9px;color:#e6e6e6;white-space:nowrap;text-shadow:0 1px 1.2px rgba(0,0,0,0.7);">Outline thickness</div><div style="position:absolute;right:318.5px;top:485.0px;line-height:16.8px;font-family:'Liberation Sans', sans-serif;font-size:12.9px;color:#e6e6e6;white-space:nowrap;text-shadow:0 1px 1.2px rgba(0,0,0,0.7);">0.00</div><svg style="position:absolute;left:2459.4px;top:511.4px" width="11.6" height="11.6"><circle cx="5.8" cy="5.8" r="4.6" fill="#90bfa6" stroke="#7d7d7d" stroke-width="1.2"/></svg><div style="position:absolute;left:2477.0px;top:508.8px;line-height:16.8px;font-family:'Liberation Sans', sans-serif;font-size:12.9px;color:#e6e6e6;white-space:nowrap;text-shadow:0 1px 1.2px rgba(0,0,0,0.7);">Opacity</div><svg style="position:absolute;left:2459.4px;top:534.7px" width="11.6" height="11.6"><circle cx="5.8" cy="5.8" r="4.6" fill="#b48aa3" stroke="#7d7d7d" stroke-width="1.2"/></svg><div style="position:absolute;left:2477.0px;top:533.8px;width:13.5px;height:13.5px;background:#4772b3;border-radius:3px;"></div><svg style="position:absolute;left:2477px;top:533.75px" width="13.5" height="13.5" viewBox="0 0 18 18"><path d="M3.8,9.4 L7.4,12.8 L14.2,4.8" fill="none" stroke="#fff" stroke-width="2.4" stroke-linecap="round" stroke-linejoin="round"/></svg><div style="position:absolute;left:2495.0px;top:532.1px;line-height:16.8px;font-family:'Liberation Sans', sans-serif;font-size:12.9px;color:#e6e6e6;white-space:nowrap;text-shadow:0 1px 1.2px rgba(0,0,0,0.7);">Smooth</div><svg style="position:absolute;left:2459.4px;top:558.5px" width="11.6" height="11.6"><circle cx="5.8" cy="5.8" r="4.6" fill="#b48aa3" stroke="#7d7d7d" stroke-width="1.2"/></svg><div style="position:absolute;left:2477.0px;top:557.5px;width:13.5px;height:13.5px;background:#545454;border-radius:3px;"></div><div style="position:absolute;left:2495.0px;top:555.9px;line-height:16.8px;font-family:'Liberation Sans', sans-serif;font-size:12.9px;color:#e6e6e6;white-space:nowrap;text-shadow:0 1px 1.2px rgba(0,0,0,0.7);">Smooth shadow terminator</div><svg style="position:absolute;left:2459.4px;top:581.8px" width="11.6" height="11.6"><circle cx="5.8" cy="5.8" r="4.6" fill="#a3a3a3" stroke="#7d7d7d" stroke-width="1.2"/></svg><div style="position:absolute;left:2477.0px;top:579.2px;line-height:16.8px;font-family:'Liberation Sans', sans-serif;font-size:12.9px;color:#e6e6e6;white-space:nowrap;text-shadow:0 1px 1.2px rgba(0,0,0,0.7);">Round edges</div><div style="position:absolute;left:2650.5px;top:577.4px;width:20.5px;height:20.5px;background:#545454;border-radius:3px;"></div><svg style="position:absolute;left:2650.5px;top:577.4px" width="20.5" height="20.5"><path d="M10.2,5.1V15.4M5.5,10.2H15.0" stroke="#e8e8e8" stroke-width="1.3"/></svg><svg style="position:absolute;left:2459.4px;top:605.6px" width="11.6" height="11.6"><circle cx="5.8" cy="5.8" r="4.6" fill="#a3a3a3" stroke="#7d7d7d" stroke-width="1.2"/></svg><div style="position:absolute;left:2477.0px;top:603.0px;line-height:16.8px;font-family:'Liberation Sans', sans-serif;font-size:12.9px;color:#e6e6e6;white-space:nowrap;text-shadow:0 1px 1.2px rgba(0,0,0,0.7);">Custom AOV</div><div style="position:absolute;left:2575.0px;top:601.2px;width:96.0px;height:20.4px;background:#222222;border-radius:4px;box-shadow:inset 0 0 0 1px #383838;"></div><div style="position:absolute;left:2583.5px;top:603.0px;line-height:16.8px;font-family:'Liberation Sans', sans-serif;font-size:12.9px;color:#e6e6e6;white-space:nowrap;text-shadow:0 1px 1.2px rgba(0,0,0,0.7);">None</div><svg style="position:absolute;left:2659.5px;top:609.7px" width="10.0" height="6.4"><path d="M1,1 L5.0,5.4 L9.0,1" fill="none" stroke="#d0d0d0" stroke-width="1.4"/></svg><svg style="position:absolute;left:2459.4px;top:629.5px" width="11.6" height="11.6"><circle cx="5.8" cy="5.8" r="4.6" fill="#cfae2e" stroke="#7d7d7d" stroke-width="1.2"/></svg><div style="position:absolute;left:2476.6px;top:625.1px;width:194.4px;height:20.4px;background:#545454;border-radius:4px;"></div><div style="position:absolute;left:2476.6px;top:625.1px;width:91.4px;height:20.4px;background:#4772b3;border-radius:4px 0 0 4px"></div><div style="position:absolute;left:2494.1px;top:626.9px;line-height:16.8px;font-family:'Liberation Sans', sans-serif;font-size:12.9px;color:#e6e6e6;white-space:nowrap;text-shadow:0 1px 1.2px rgba(0,0,0,0.7);">Priority</div><div style="position:absolute;right:318.5px;top:626.9px;line-height:16.8px;font-family:'Liberation Sans', sans-serif;font-size:12.9px;color:#e6e6e6;white-space:nowrap;text-shadow:0 1px 1.2px rgba(0,0,0,0.7);">0</div><svg style="position:absolute;left:2459.4px;top:652.8px" width="11.6" height="11.6"><circle cx="5.8" cy="5.8" r="4.6" fill="#a3a3a3" stroke="#7d7d7d" stroke-width="1.2"/></svg><div style="position:absolute;left:2477.0px;top:650.2px;line-height:16.8px;font-family:'Liberation Sans', sans-serif;font-size:12.9px;color:#e6e6e6;white-space:nowrap;text-shadow:0 1px 1.2px rgba(0,0,0,0.7);">Custom AOV ...</div><div style="position:absolute;left:2575.0px;top:648.4px;width:96.0px;height:20.4px;background:#222222;border-radius:4px;box-shadow:inset 0 0 0 1px #383838;"></div><div style="position:absolute;left:2583.5px;top:650.2px;line-height:16.8px;font-family:'Liberation Sans', sans-serif;font-size:12.9px;color:#e6e6e6;white-space:nowrap;text-shadow:0 1px 1.2px rgba(0,0,0,0.7);">All</div><svg style="position:absolute;left:2659.5px;top:656.9px" width="10.0" height="6.4"><path d="M1,1 L5.0,5.4 L9.0,1" fill="none" stroke="#d0d0d0" stroke-width="1.4"/></svg><div style="position:absolute;left:2781.4px;top:134.0px;width:152.6px;height:154.4px;background:#303030;border-radius:5px;box-shadow:0 2px 6px rgba(0,0,0,0.45);"></div><div style="position:absolute;left:2781.4px;top:134.0px;width:152.6px;height:22.5px;background:#3d1e26;border-radius:5px 5px 0 0"></div><svg style="position:absolute;left:2793.4px;top:142.8px" width="11.0" height="7.0"><path d="M1,1 L5.5,6.0 L10.0,1" fill="none" stroke="#d0d0d0" stroke-width="1.4"/></svg><div style="position:absolute;left:2808.9px;top:136.9px;line-height:16.8px;font-family:'Liberation Sans', sans-serif;font-size:12.9px;color:#e6e6e6;white-space:nowrap;text-shadow:0 1px 1.2px rgba(0,0,0,0.7);">Material Output</div><div style="position:absolute;left:2792.5px;top:164.8px;width:128.9px;height:20.4px;background:#222222;border-radius:4px;box-shadow:inset 0 0 0 1px #383838;"></div><div style="position:absolute;left:2801.0px;top:166.6px;line-height:16.8px;font-family:'Liberation Sans', sans-serif;font-size:12.9px;color:#e6e6e6;white-space:nowrap;text-shadow:0 1px 1.2px rgba(0,0,0,0.7);">All</div><svg style="position:absolute;left:2909.9px;top:173.3px" width="10.0" height="6.4"><path d="M1,1 L5.0,5.4 L9.0,1" fill="none" stroke="#d0d0d0" stroke-width="1.4"/></svg><svg style="position:absolute;left:2774.8px;top:193.2px" width="11.6" height="11.6"><circle cx="5.8" cy="5.8" r="4.6" fill="#63c763" stroke="#7d7d7d" stroke-width="1.2"/></svg><div style="position:absolute;left:2792.4px;top:190.6px;line-height:16.8px;font-family:'Liberation Sans', sans-serif;font-size:12.9px;color:#e6e6e6;white-space:nowrap;text-shadow:0 1px 1.2px rgba(0,0,0,0.7);">Surface</div><svg style="position:absolute;left:2774.8px;top:217.6px" width="11.6" height="11.6"><circle cx="5.8" cy="5.8" r="4.6" fill="#63c763" stroke="#7d7d7d" stroke-width="1.2"/></svg><div style="position:absolute;left:2792.4px;top:215.0px;line-height:16.8px;font-family:'Liberation Sans', sans-serif;font-size:12.9px;color:#e6e6e6;white-space:nowrap;text-shadow:0 1px 1.2px rgba(0,0,0,0.7);">Volume</div><svg style="position:absolute;left:2774.8px;top:241.9px" width="11.6" height="11.6"><circle cx="5.8" cy="5.8" r="4.6" fill="#6363c7" stroke="#7d7d7d" stroke-width="1.2"/></svg><div style="position:absolute;left:2792.4px;top:239.3px;line-height:16.8px;font-family:'Liberation Sans', sans-serif;font-size:12.9px;color:#e6e6e6;white-space:nowrap;text-shadow:0 1px 1.2px rgba(0,0,0,0.7);">Displacement</div><svg style="position:absolute;left:2774.8px;top:266.2px" width="11.6" height="11.6"><circle cx="5.8" cy="5.8" r="4.6" fill="#a1a1a1" stroke="#7d7d7d" stroke-width="1.2"/></svg><div style="position:absolute;left:2792.4px;top:263.6px;line-height:16.8px;font-family:'Liberation Sans', sans-serif;font-size:12.9px;color:#e6e6e6;white-space:nowrap;text-shadow:0 1px 1.2px rgba(0,0,0,0.7);">Thickness</div><div style="position:absolute;left:2086.0px;top:671.0px;width:218.0px;height:295.6px;background:#303030;border-radius:5px;box-shadow:0 2px 6px rgba(0,0,0,0.45);"></div><div style="position:absolute;left:2086.0px;top:671.0px;width:218.0px;height:21.4px;background:#83304a;border-radius:5px 5px 0 0"></div><svg style="position:absolute;left:2098.0px;top:679.2px" width="11.0" height="7.0"><path d="M1,1 L5.5,6.0 L10.0,1" fill="none" stroke="#d0d0d0" stroke-width="1.4"/></svg><div style="position:absolute;left:2113.5px;top:673.3px;line-height:16.8px;font-family:'Liberation Sans', sans-serif;font-size:12.9px;color:#e6e6e6;white-space:nowrap;text-shadow:0 1px 1.2px rgba(0,0,0,0.7);">Vertex displacement</div><div style="position:absolute;right:683.0px;top:699.8px;line-height:16.8px;font-family:'Liberation Sans', sans-serif;font-size:12.9px;color:#e6e6e6;white-space:nowrap;text-shadow:0 1px 1.2px rgba(0,0,0,0.7);">Displacement out</div><svg style="position:absolute;left:2297.4px;top:702.4px" width="11.6" height="11.6"><circle cx="5.8" cy="5.8" r="4.6" fill="#c8c8c8" stroke="#7d7d7d" stroke-width="1.2"/></svg><div style="position:absolute;left:2097.0px;top:728.9px;line-height:16.8px;font-family:'Liberation Sans', sans-serif;font-size:12.9px;color:#e6e6e6;white-space:nowrap;text-shadow:0 1px 1.2px rgba(0,0,0,0.7);">Comp...</div><div style="position:absolute;left:2145.5px;top:727.1px;width:145.9px;height:20.4px;background:#222222;border-radius:4px;box-shadow:inset 0 0 0 1px #383838;"></div><div style="position:absolute;left:2154.0px;top:728.9px;line-height:16.8px;font-family:'Liberation Sans', sans-serif;font-size:12.9px;color:#e6e6e6;white-space:nowrap;text-shadow:0 1px 1.2px rgba(0,0,0,0.7);">Latest (2023.1)</div><svg style="position:absolute;left:2279.9px;top:735.6px" width="10.0" height="6.4"><path d="M1,1 L5.0,5.4 L9.0,1" fill="none" stroke="#d0d0d0" stroke-width="1.4"/></svg><svg style="position:absolute;left:2079.4px;top:756.4px" width="11.6" height="11.6"><circle cx="5.8" cy="5.8" r="4.6" fill="#90bfa6" stroke="#7d7d7d" stroke-width="1.2"/></svg><div style="position:absolute;left:2097.0px;top:753.8px;line-height:16.8px;font-family:'Liberation Sans', sans-serif;font-size:12.9px;color:#e6e6e6;white-space:nowrap;text-shadow:0 1px 1.2px rgba(0,0,0,0.7);">Texture</div><div style="position:absolute;left:2270.9px;top:752.0px;width:20.5px;height:20.5px;background:#545454;border-radius:3px;"></div><svg style="position:absolute;left:2270.9px;top:752.0px" width="20.5" height="20.5"><path d="M10.2,5.1V15.4M5.5,10.2H15.0" stroke="#e8e8e8" stroke-width="1.3"/></svg><svg style="position:absolute;left:2079.4px;top:779.7px" width="11.6" height="11.6"><circle cx="5.8" cy="5.8" r="4.6" fill="#6d8fb8" stroke="#7d7d7d" stroke-width="1.2"/></svg><div style="position:absolute;left:2096.6px;top:775.3px;width:194.8px;height:20.4px;background:#545454;border-radius:4px;"></div><div style="position:absolute;left:2114.1px;top:777.1px;line-height:16.8px;font-family:'Liberation Sans', sans-serif;font-size:12.9px;color:#e6e6e6;white-space:nowrap;text-shadow:0 1px 1.2px rgba(0,0,0,0.7);">Height</div><div style="position:absolute;right:698.1px;top:777.1px;line-height:16.8px;font-family:'Liberation Sans', sans-serif;font-size:12.9px;color:#e6e6e6;white-space:nowrap;text-shadow:0 1px 1.2px rgba(0,0,0,0.7);">0.05</div><svg style="position:absolute;left:2079.4px;top:803.5px" width="11.6" height="11.6"><circle cx="5.8" cy="5.8" r="4.6" fill="#6d8fb8" stroke="#7d7d7d" stroke-width="1.2"/></svg><div style="position:absolute;left:2096.6px;top:799.1px;width:194.8px;height:20.4px;background:#545454;border-radius:4px;"></div><div style="position:absolute;left:2114.1px;top:800.9px;line-height:16.8px;font-family:'Liberation Sans', sans-serif;font-size:12.9px;color:#e6e6e6;white-space:nowrap;text-shadow:0 1px 1.2px rgba(0,0,0,0.7);">Mid level</div><div style="position:absolute;right:698.1px;top:800.9px;line-height:16.8px;font-family:'Liberation Sans', sans-serif;font-size:12.9px;color:#e6e6e6;white-space:nowrap;text-shadow:0 1px 1.2px rgba(0,0,0,0.7);">0.00</div><svg style="position:absolute;left:2079.4px;top:827.4px" width="11.6" height="11.6"><circle cx="5.8" cy="5.8" r="4.6" fill="#a3a3a3" stroke="#7d7d7d" stroke-width="1.2"/></svg><div style="position:absolute;left:2097.0px;top:824.8px;line-height:16.8px;font-family:'Liberation Sans', sans-serif;font-size:12.9px;color:#e6e6e6;white-space:nowrap;text-shadow:0 1px 1.2px rgba(0,0,0,0.7);">Map type</div><div style="position:absolute;left:2199.0px;top:823.0px;width:92.4px;height:20.4px;background:#222222;border-radius:4px;box-shadow:inset 0 0 0 1px #383838;"></div><div style="position:absolute;left:2207.5px;top:824.8px;line-height:16.8px;font-family:'Liberation Sans', sans-serif;font-size:12.9px;color:#e6e6e6;white-space:nowrap;text-shadow:0 1px 1.2px rgba(0,0,0,0.7);">Height</div><svg style="position:absolute;left:2279.9px;top:831.5px" width="10.0" height="6.4"><path d="M1,1 L5.0,5.4 L9.0,1" fill="none" stroke="#d0d0d0" stroke-width="1.4"/></svg><svg style="position:absolute;left:2079.4px;top:850.7px" width="11.6" height="11.6"><circle cx="5.8" cy="5.8" r="4.6" fill="#a3a3a3" stroke="#7d7d7d" stroke-width="1.2"/></svg><div style="position:absolute;left:2097.0px;top:848.1px;line-height:16.8px;font-family:'Liberation Sans', sans-serif;font-size:12.9px;color:#e6e6e6;white-space:nowrap;text-shadow:0 1px 1.2px rgba(0,0,0,0.7);">Vector space</div><div style="position:absolute;left:2199.0px;top:846.3px;width:92.4px;height:20.4px;background:#222222;border-radius:4px;box-shadow:inset 0 0 0 1px #383838;"></div><div style="position:absolute;left:2207.5px;top:848.1px;line-height:16.8px;font-family:'Liberation Sans', sans-serif;font-size:12.9px;color:#e6e6e6;white-space:nowrap;text-shadow:0 1px 1.2px rgba(0,0,0,0.7);">Object</div><svg style="position:absolute;left:2279.9px;top:854.8px" width="10.0" height="6.4"><path d="M1,1 L5.0,5.4 L9.0,1" fill="none" stroke="#d0d0d0" stroke-width="1.4"/></svg><svg style="position:absolute;left:2079.4px;top:874.5px" width="11.6" height="11.6"><circle cx="5.8" cy="5.8" r="4.6" fill="#a3a3a3" stroke="#7d7d7d" stroke-width="1.2"/></svg><div style="position:absolute;left:2097.0px;top:871.9px;line-height:16.8px;font-family:'Liberation Sans', sans-serif;font-size:12.9px;color:#e6e6e6;white-space:nowrap;text-shadow:0 1px 1.2px rgba(0,0,0,0.7);">Input axes</div><div style="position:absolute;left:2199.0px;top:870.1px;width:92.4px;height:20.4px;background:#222222;border-radius:4px;box-shadow:inset 0 0 0 1px #383838;"></div><div style="position:absolute;left:2207.5px;top:871.9px;line-height:16.8px;font-family:'Liberation Sans', sans-serif;font-size:12.9px;color:#e6e6e6;white-space:nowrap;text-shadow:0 1px 1.2px rgba(0,0,0,0.7);">+X,+Y,+Z</div><svg style="position:absolute;left:2279.9px;top:878.6px" width="10.0" height="6.4"><path d="M1,1 L5.0,5.4 L9.0,1" fill="none" stroke="#d0d0d0" stroke-width="1.4"/></svg><svg style="position:absolute;left:2079.4px;top:897.8px" width="11.6" height="11.6"><circle cx="5.8" cy="5.8" r="4.6" fill="#b48aa3" stroke="#7d7d7d" stroke-width="1.2"/></svg><div style="position:absolute;left:2097.0px;top:896.9px;width:13.5px;height:13.5px;background:#545454;border-radius:3px;"></div><div style="position:absolute;left:2115.0px;top:895.2px;line-height:16.8px;font-family:'Liberation Sans', sans-serif;font-size:12.9px;color:#e6e6e6;white-space:nowrap;text-shadow:0 1px 1.2px rgba(0,0,0,0.7);">Auto bump map</div><svg style="position:absolute;left:2079.4px;top:921.6px" width="11.6" height="11.6"><circle cx="5.8" cy="5.8" r="4.6" fill="#b48aa3" stroke="#7d7d7d" stroke-width="1.2"/></svg><div style="position:absolute;left:2097.0px;top:920.6px;width:13.5px;height:13.5px;background:#545454;border-radius:3px;"></div><div style="position:absolute;left:2115.0px;top:919.0px;line-height:16.8px;font-family:'Liberation Sans', sans-serif;font-size:12.9px;color:#e6e6e6;white-space:nowrap;text-shadow:0 1px 1.2px rgba(0,0,0,0.7);">Displace rest position</div><svg style="position:absolute;left:2079.4px;top:944.4px" width="11.6" height="11.6"><circle cx="5.8" cy="5.8" r="4.6" fill="#cfae2e" stroke="#7d7d7d" stroke-width="1.2"/></svg><div style="position:absolute;left:2096.6px;top:940.0px;width:194.8px;height:20.4px;background:#545454;border-radius:4px;"></div><div style="position:absolute;left:2114.1px;top:941.8px;line-height:16.8px;font-family:'Liberation Sans', sans-serif;font-size:12.9px;color:#e6e6e6;white-space:nowrap;text-shadow:0 1px 1.2px rgba(0,0,0,0.7);">Subdivision level</div><div style="position:absolute;right:698.1px;top:941.8px;line-height:16.8px;font-family:'Liberation Sans', sans-serif;font-size:12.9px;color:#e6e6e6;white-space:nowrap;text-shadow:0 1px 1.2px rgba(0,0,0,0.7);">0</div><div style="position:absolute;left:1811.0px;top:739.0px;width:218.6px;height:85.7px;background:#303030;border-radius:5px;box-shadow:0 2px 6px rgba(0,0,0,0.45);"></div><div style="position:absolute;left:1811.0px;top:739.0px;width:218.6px;height:21.0px;background:#83304a;border-radius:5px 5px 0 0"></div><div style="position:absolute;left:1809.4px;top:737.4px;width:218.6px;height:85.7px;border:1.6px solid #f0861e;border-radius:6.6px"></div><svg style="position:absolute;left:1823.0px;top:747.0px" width="11.0" height="7.0"><path d="M1,1 L5.5,6.0 L10.0,1" fill="none" stroke="#d0d0d0" stroke-width="1.4"/></svg><div style="position:absolute;left:1838.5px;top:741.1px;line-height:16.8px;font-family:'Liberation Sans', sans-serif;font-size:12.9px;color:#e6e6e6;white-space:nowrap;text-shadow:0 1px 1.2px rgba(0,0,0,0.7);">RGB color</div><div style="position:absolute;right:957.4px;top:768.1px;line-height:16.8px;font-family:'Liberation Sans', sans-serif;font-size:12.9px;color:#e6e6e6;white-space:nowrap;text-shadow:0 1px 1.2px rgba(0,0,0,0.7);">Texture out</div><svg style="position:absolute;left:2023.0px;top:770.7px" width="11.6" height="11.6"><circle cx="5.8" cy="5.8" r="4.6" fill="#90bfa6" stroke="#7d7d7d" stroke-width="1.2"/></svg><div style="position:absolute;left:1822.0px;top:797.8px;line-height:16.8px;font-family:'Liberation Sans', sans-serif;font-size:12.9px;color:#e6e6e6;white-space:nowrap;text-shadow:0 1px 1.2px rgba(0,0,0,0.7);">Value:</div><div style="position:absolute;left:1920.6px;top:796.3px;width:96.4px;height:19.8px;background:#ffffff;border-radius:4px;"></div><div style="position:absolute;left:1670px;top:1146px;width:1304px;height:611px;background-color:#1d1d1d;border-radius:6px;box-shadow:inset 0 0 0 1px #2c2c2c;background-image:radial-gradient(circle at 1.2px 1.2px,#222222 1.1px,transparent 1.6px);background-size:25.6px 25.6px;background-position:9px 6px;overflow:hidden"></div><div style="position:absolute;left:1680.0px;top:1137.0px;width:1294.0px;height:3.8px;background:#2f2f2f;border-radius:2px;"></div><div style="position:absolute;left:1679.0px;top:1150.0px;width:39.6px;height:24.7px;background:#282828;border-radius:4px;box-shadow:inset 0 0 0 1px #383838;"></div><svg style="position:absolute;left:1683px;top:1153px" width="34" height="20"><circle cx="3.8" cy="2.5" r="1.8" fill="#999"/><circle cx="9.7" cy="3.8" r="2.2" fill="#aaa"/><circle cx="5.5" cy="9.2" r="2.7" fill="#ccc"/><circle cx="12.2" cy="12.5" r="4.5" fill="#e8e8e8"/><path d="M21,9 L24.5,12.5 L28,9" fill="none" stroke="#ddd" stroke-width="1.4"/></svg><div style="position:absolute;left:1725.5px;top:1150.0px;width:94.5px;height:24.7px;background:#282828;border-radius:4px;box-shadow:inset 0 0 0 1px #383838;"></div><div style="position:absolute;left:1735.0px;top:1152.9px;line-height:18.9px;font-family:'Liberation Sans', sans-serif;font-size:14.5px;color:#e6e6e6;white-space:nowrap;text-shadow:0 1px 1.2px rgba(0,0,0,0.7);">Modifier</div><svg style="position:absolute;left:1806.0px;top:1160.8px" width="10.0" height="6.4"><path d="M1,1 L5.0,5.4 L9.0,1" fill="none" stroke="#d0d0d0" stroke-width="1.4"/></svg><div style="position:absolute;left:1836.0px;top:1152.9px;line-height:18.9px;font-family:'Liberation Sans', sans-serif;font-size:14.5px;color:#e6e6e6;white-space:nowrap;text-shadow:0 1px 1.2px rgba(0,0,0,0.7);">View</div><div style="position:absolute;left:1886.0px;top:1152.9px;line-height:18.9px;font-family:'Liberation Sans', sans-serif;font-size:14.5px;color:#e6e6e6;white-space:nowrap;text-shadow:0 1px 1.2px rgba(0,0,0,0.7);">Select</div><div style="position:absolute;left:1947.0px;top:1152.9px;line-height:18.9px;font-family:'Liberation Sans', sans-serif;font-size:14.5px;color:#e6e6e6;white-space:nowrap;text-shadow:0 1px 1.2px rgba(0,0,0,0.7);">Add</div><div style="position:absolute;left:1991.0px;top:1152.9px;line-height:18.9px;font-family:'Liberation Sans', sans-serif;font-size:14.5px;color:#e6e6e6;white-space:nowrap;text-shadow:0 1px 1.2px rgba(0,0,0,0.7);">Node</div><div style="position:absolute;left:2182.0px;top:1150.0px;width:241.5px;height:24.7px;background:#282828;border-radius:4px;box-shadow:inset 0 0 0 1px #383838;"></div><div style="position:absolute;left:2222.0px;top:1150.5px;width:127.0px;height:23.7px;background:#1f1f1f;border-radius:0px;"></div><div style="position:absolute;left:2349.0px;top:1150.5px;width:74.0px;height:23.7px;background:#3d3d3d;border-radius:0px;border-radius:0 4px 4px 0;"></div><div style="position:absolute;left:2231.0px;top:1152.8px;line-height:19.0px;font-family:'Liberation Sans', sans-serif;font-size:14.6px;color:#e6e6e6;white-space:nowrap;text-shadow:0 1px 1.2px rgba(0,0,0,0.7);">Geometry Nodes</div><svg style="position:absolute;left:2187px;top:1154px" width="34" height="18"><rect x="2" y="4" width="11" height="10" rx="2" fill="none" stroke="#ddd" stroke-width="1.5"/><rect x="6" y="8" width="4" height="3" fill="#ddd"/><path d="M14,3 h3 v11 h-3" fill="none" stroke="#ddd" stroke-width="1.5"/><path d="M22,8 L25.5,11.5 L29,8" fill="none" stroke="#ddd" stroke-width="1.4"/></svg><svg style="position:absolute;left:2352px;top:1151px" width="72" height="23"><path d="M10,4 L17,6.5 V12 C17,16 13.5,18.5 10,19.5 C6.5,18.5 3,16 3,12 V6.5Z" fill="none" stroke="#aaa" stroke-width="1.4"/><rect x="27" y="7" width="9" height="11" fill="none" stroke="#bbb" stroke-width="1.4"/><path d="M30,7 V4 H39 V15 H36" fill="none" stroke="#bbb" stroke-width="1.4"/><path d="M52,6.5 L62,16.5 M62,6.5 L52,16.5" stroke="#ccc" stroke-width="1.6"/></svg><svg style="position:absolute;left:2432px;top:1152px" width="22" height="22"><path d="M12,3 L19,10 L16,11 L12,15 L12,18 L4,10 L7,10 L11,6Z M8,14 L3,19" fill="none" stroke="#aaa" stroke-width="1.4"/></svg><div style="position:absolute;left:2865.0px;top:1150.0px;width:64.0px;height:24.7px;background:#282828;border-radius:4px;box-shadow:inset 0 0 0 1px #383838;"></div><div style="position:absolute;left:2865.0px;top:1150.0px;width:24.0px;height:24.7px;background:#4a4a4a;border-radius:4px;"></div><svg style="position:absolute;left:2866px;top:1152px" width="64" height="22"><path d="M6,16 C3,12 4,5 11,5 C17,5 18,11 15,14 L12,17" fill="none" stroke="#aaa" stroke-width="1.6"/><rect x="30" y="4" width="5" height="5" fill="#ddd"/><path d="M37,3V19M31,12H45M30,16H45M40,8V19" stroke="#ccc" stroke-width="1.2"/><path d="M50,9 L53.5,12.5 L57,9" fill="none" stroke="#ddd" stroke-width="1.4"/></svg><div style="position:absolute;left:2937.0px;top:1150.0px;width:40.0px;height:24.7px;background:#282828;border-radius:4px;box-shadow:inset 0 0 0 1px #383838;"></div><div style="position:absolute;left:2937.0px;top:1150.0px;width:24.0px;height:24.7px;background:#4772b3;border-radius:4px;"></div><svg style="position:absolute;left:2938px;top:1151px" width="24" height="23"><circle cx="14" cy="9" r="5.5" fill="#fff"/><path d="M7,10 A6,6 0 1 0 14,17" fill="none" stroke="#fff" stroke-width="1.6"/></svg><svg style="position:absolute;left:1668px;top:1197px" width="12" height="14"><path d="M3,2 L8,7 L3,12" fill="none" stroke="#bbb" stroke-width="1.4"/></svg><svg style="position:absolute;left:1691px;top:1194px" width="20" height="20"><path d="M1,5V1H5M14,1H18V5M18,14V18H14M5,18H1V14" fill="none" stroke="#999" stroke-width="1.4"/><rect x="5" y="5" width="9.5" height="9.5" fill="#e0e0e0"/></svg><div style="position:absolute;left:1721.0px;top:1194.4px;line-height:18.9px;font-family:'Liberation Sans', sans-serif;font-size:14.5px;color:#e6e6e6;white-space:nowrap;text-shadow:0 1px 1.2px rgba(0,0,0,0.7);">Plane</div><svg style="position:absolute;left:1776px;top:1197px" width="12" height="14"><path d="M3,2 L8,7 L3,12" fill="none" stroke="#bbb" stroke-width="1.4"/></svg><svg style="position:absolute;left:1797px;top:1193px" width="22" height="22"><circle cx="3.5" cy="3" r="1.8" fill="#999"/><circle cx="8.5" cy="4.5" r="2" fill="#aaa"/><circle cx="5" cy="9.5" r="2.5" fill="#ccc"/><circle cx="11.5" cy="13" r="4.2" fill="#e8e8e8"/></svg><div style="position:absolute;left:1827.0px;top:1194.4px;line-height:18.9px;font-family:'Liberation Sans', sans-serif;font-size:14.5px;color:#e6e6e6;white-space:nowrap;text-shadow:0 1px 1.2px rgba(0,0,0,0.7);">GeometryNodes</div><svg style="position:absolute;left:1950px;top:1197px" width="12" height="14"><path d="M3,2 L8,7 L3,12" fill="none" stroke="#bbb" stroke-width="1.4"/></svg><svg style="position:absolute;left:1972px;top:1194px" width="20" height="20"><rect x="2" y="5" width="11" height="10" rx="2" fill="none" stroke="#ddd" stroke-width="1.5"/><rect x="5.5" y="9" width="4" height="3" fill="#ddd"/><path d="M13,3 h4 v12 h-4" fill="none" stroke="#ddd" stroke-width="1.5"/></svg><div style="position:absolute;left:2001.0px;top:1194.4px;line-height:18.9px;font-family:'Liberation Sans', sans-serif;font-size:14.5px;color:#e6e6e6;white-space:nowrap;text-shadow:0 1px 1.2px rgba(0,0,0,0.7);">Geometry Nodes</div><svg style="position:absolute;left:0;top:0" width="2974" height="1747"><path d="M2002.6,1566.9 C2086.5,1566.9 2086.5,1534.6 2170.4,1534.6" fill="none" stroke="#00d6a3" stroke-width="2.6"/><path d="M2347.8,1415.5 C2373.05,1415.5 2373.05,1487.8 2398.3,1487.8" fill="none" stroke="#86e6cf" stroke-width="2.6"/><path d="M2578.2,1424.3 C2603.25,1424.3 2603.25,1451.7 2628.3,1451.7" fill="none" stroke="#86e6cf" stroke-width="2.6"/></svg><div style="position:absolute;left:1824.0px;top:1413.4px;width:178.6px;height:262.6px;background:#303030;border-radius:5.75px;box-shadow:0 2.3px 6.8999999999999995px rgba(0,0,0,0.45);"></div><div style="position:absolute;left:1824.0px;top:1413.4px;width:178.6px;height:25.4px;background:#83304a;border-radius:5.75px 5.75px 0 0"></div><svg style="position:absolute;left:1837.8px;top:1423.3px" width="12.3" height="7.7"><path d="M1,1 L6.2,6.7 L11.3,1" fill="none" stroke="#d0d0d0" stroke-width="1.4"/></svg><div style="position:absolute;left:1855.6px;top:1416.5px;line-height:19.3px;font-family:'Liberation Sans', sans-serif;font-size:14.834999999999999px;color:#e6e6e6;white-space:nowrap;text-shadow:0 1px 1.2px rgba(0,0,0,0.7);">Object Info</div><div style="position:absolute;right:986.7px;top:1446.7px;line-height:19.3px;font-family:'Liberation Sans', sans-serif;font-size:14.834999999999999px;color:#e6e6e6;white-space:nowrap;text-shadow:0 1px 1.2px rgba(0,0,0,0.7);">Transform</div><svg style="position:absolute;left:1995.8px;top:1449.5px" width="13.6" height="13.6"><circle cx="6.8" cy="6.8" r="5.6" fill="#c93a8e" stroke="#1c1c1c" stroke-width="1.2"/></svg><div style="position:absolute;right:986.7px;top:1474.7px;line-height:19.3px;font-family:'Liberation Sans', sans-serif;font-size:14.834999999999999px;color:#e6e6e6;white-space:nowrap;text-shadow:0 1px 1.2px rgba(0,0,0,0.7);">Location</div><svg style="position:absolute;left:1995.8px;top:1477.5px" width="13.6" height="13.6"><circle cx="6.8" cy="6.8" r="5.6" fill="#6363c7" stroke="#1c1c1c" stroke-width="1.2"/></svg><div style="position:absolute;right:986.7px;top:1502.3px;line-height:19.3px;font-family:'Liberation Sans', sans-serif;font-size:14.834999999999999px;color:#e6e6e6;white-space:nowrap;text-shadow:0 1px 1.2px rgba(0,0,0,0.7);">Rotation</div><svg style="position:absolute;left:1995.8px;top:1505.1px" width="13.6" height="13.6"><circle cx="6.8" cy="6.8" r="5.6" fill="#a363c7" stroke="#1c1c1c" stroke-width="1.2"/></svg><div style="position:absolute;right:986.7px;top:1529.8px;line-height:19.3px;font-family:'Liberation Sans', sans-serif;font-size:14.834999999999999px;color:#e6e6e6;white-space:nowrap;text-shadow:0 1px 1.2px rgba(0,0,0,0.7);">Scale</div><svg style="position:absolute;left:1995.8px;top:1532.6px" width="13.6" height="13.6"><circle cx="6.8" cy="6.8" r="5.6" fill="#6363c7" stroke="#1c1c1c" stroke-width="1.2"/></svg><div style="position:absolute;right:986.7px;top:1557.3px;line-height:19.3px;font-family:'Liberation Sans', sans-serif;font-size:14.834999999999999px;color:#e6e6e6;white-space:nowrap;text-shadow:0 1px 1.2px rgba(0,0,0,0.7);">Geometry</div><svg style="position:absolute;left:1995.8px;top:1560.1px" width="13.6" height="13.6"><circle cx="6.8" cy="6.8" r="5.6" fill="#00d6a3" stroke="#1c1c1c" stroke-width="1.2"/></svg><div style="position:absolute;left:1837.0px;top:1589.7px;width:151.3px;height:23.8px;background:#545454;border-radius:4px;"></div><div style="position:absolute;left:1837px;top:1589.7px;width:75px;height:23.8px;background:#4772b3;border-radius:4px 0 0 4px"></div><div style="position:absolute;left:1874.5px;top:1592.2px;line-height:18.7px;font-family:'Liberation Sans', sans-serif;font-size:14.4px;color:#e6e6e6;white-space:nowrap;text-shadow:0 1px 1.2px rgba(0,0,0,0.7);transform:translateX(-50%)">Original</div><div style="position:absolute;left:1950.0px;top:1592.2px;line-height:18.7px;font-family:'Liberation Sans', sans-serif;font-size:14.4px;color:#e6e6e6;white-space:nowrap;text-shadow:0 1px 1.2px rgba(0,0,0,0.7);transform:translateX(-50%)">Relative</div><div style="position:absolute;left:1837.0px;top:1618.8px;width:151.3px;height:23.8px;background:#282828;border-radius:4px;box-shadow:inset 0 0 0 1px #3a3a3a;"></div><svg style="position:absolute;left:1841px;top:1622px" width="18" height="18"><path d="M1,5V1H5M12,1H16V5M16,12V16H12M5,16H1V12" fill="none" stroke="#999" stroke-width="1.3"/><rect x="4.5" y="4.5" width="8" height="8" fill="#e0e0e0"/></svg><div style="position:absolute;left:1865.0px;top:1621.3px;line-height:18.7px;font-family:'Liberation Sans', sans-serif;font-size:14.4px;color:#e6e6e6;white-space:nowrap;text-shadow:0 1px 1.2px rgba(0,0,0,0.7);">Suzanne</div><svg style="position:absolute;left:1965px;top:1624px" width="14" height="14"><path d="M2,2 L12,12 M12,2 L2,12" stroke="#ccc" stroke-width="1.5"/></svg><svg style="position:absolute;left:1816.9px;top:1623.9px" width="13.7" height="13.7"><circle cx="6.8" cy="6.8" r="5.6" fill="#ed9e5c" stroke="#1c1c1c" stroke-width="1.2"/></svg><svg style="position:absolute;left:1816.9px;top:1650.6px" width="13.7" height="13.7"><circle cx="6.8" cy="6.8" r="5.6" fill="#cca6d6" stroke="#1c1c1c" stroke-width="1.2"/></svg><div style="position:absolute;left:1838.0px;top:1649.3px;width:16.2px;height:16.2px;background:#545454;border-radius:3.4499999999999997px;"></div><div style="position:absolute;left:1858.0px;top:1648.0px;line-height:18.7px;font-family:'Liberation Sans', sans-serif;font-size:14.4px;color:#e6e6e6;white-space:nowrap;text-shadow:0 1px 1.2px rgba(0,0,0,0.7);">As Instance</div><div style="position:absolute;left:2170.4px;top:1372.6px;width:177.4px;height:290.1px;background:#303030;border-radius:5.75px;box-shadow:0 2.3px 6.8999999999999995px rgba(0,0,0,0.45);"></div><div style="position:absolute;left:2170.4px;top:1372.6px;width:177.4px;height:24.9px;background:#1f6e5c;border-radius:5.75px 5.75px 0 0"></div><svg style="position:absolute;left:2184.2px;top:1382.2px" width="12.3" height="7.7"><path d="M1,1 L6.2,6.7 L11.3,1" fill="none" stroke="#d0d0d0" stroke-width="1.4"/></svg><div style="position:absolute;left:2202.0px;top:1375.4px;line-height:19.3px;font-family:'Liberation Sans', sans-serif;font-size:14.834999999999999px;color:#e6e6e6;white-space:nowrap;text-shadow:0 1px 1.2px rgba(0,0,0,0.7);">Extrude Mesh</div><div style="position:absolute;right:641.5px;top:1405.9px;line-height:19.3px;font-family:'Liberation Sans', sans-serif;font-size:14.834999999999999px;color:#e6e6e6;white-space:nowrap;text-shadow:0 1px 1.2px rgba(0,0,0,0.7);">Mesh</div><svg style="position:absolute;left:2341.0px;top:1408.7px" width="13.6" height="13.6"><circle cx="6.8" cy="6.8" r="5.6" fill="#00d6a3" stroke="#1c1c1c" stroke-width="1.2"/></svg><div style="position:absolute;right:641.5px;top:1434.0px;line-height:19.3px;font-family:'Liberation Sans', sans-serif;font-size:14.834999999999999px;color:#e6e6e6;white-space:nowrap;text-shadow:0 1px 1.2px rgba(0,0,0,0.7);">Top</div><svg style="position:absolute;left:2339.4px;top:1435.2px" width="16.9" height="16.9"><path d="M8.44,2.0 L14.879999999999999,8.44 L8.44,14.879999999999999 L2.0,8.44Z" fill="#cca6d6" stroke="#1c1c1c" stroke-width="1"/></svg><div style="position:absolute;right:641.5px;top:1461.5px;line-height:19.3px;font-family:'Liberation Sans', sans-serif;font-size:14.834999999999999px;color:#e6e6e6;white-space:nowrap;text-shadow:0 1px 1.2px rgba(0,0,0,0.7);">Side</div><svg style="position:absolute;left:2339.4px;top:1462.7px" width="16.9" height="16.9"><path d="M8.44,2.0 L14.879999999999999,8.44 L8.44,14.879999999999999 L2.0,8.44Z" fill="#cca6d6" stroke="#1c1c1c" stroke-width="1"/></svg><div style="position:absolute;left:2182.6px;top:1494.5px;width:150.7px;height:23.5px;background:#222222;border-radius:4.6px;box-shadow:inset 0 0 0 1px #383838;"></div><div style="position:absolute;left:2192.4px;top:1496.7px;line-height:19.3px;font-family:'Liberation Sans', sans-serif;font-size:14.834999999999999px;color:#e6e6e6;white-space:nowrap;text-shadow:0 1px 1.2px rgba(0,0,0,0.7);">Faces</div><svg style="position:absolute;left:2320.1px;top:1504.3px" width="11.2" height="7.1"><path d="M1,1 L5.6,6.1 L10.2,1" fill="none" stroke="#d0d0d0" stroke-width="1.4"/></svg><svg style="position:absolute;left:2163.6px;top:1527.8px" width="13.6" height="13.6"><circle cx="6.8" cy="6.8" r="5.6" fill="#00d6a3" stroke="#1c1c1c" stroke-width="1.2"/></svg><div style="position:absolute;left:2183.4px;top:1525.0px;line-height:19.3px;font-family:'Liberation Sans', sans-serif;font-size:14.834999999999999px;color:#e6e6e6;white-space:nowrap;text-shadow:0 1px 1.2px rgba(0,0,0,0.7);">Mesh</div><svg style="position:absolute;left:2162.0px;top:1553.2px" width="16.9" height="16.9"><path d="M8.44,2.0 L14.879999999999999,8.44 L8.44,14.879999999999999 L2.0,8.44Z" fill="#cca6d6" stroke="#1c1c1c" stroke-width="1"/><circle cx="8.44" cy="8.44" r="1.6" fill="#1c1c1c"/></svg><div style="position:absolute;left:2183.4px;top:1552.0px;line-height:19.3px;font-family:'Liberation Sans', sans-serif;font-size:14.834999999999999px;color:#e6e6e6;white-space:nowrap;text-shadow:0 1px 1.2px rgba(0,0,0,0.7);">Selection</div><svg style="position:absolute;left:2162.0px;top:1580.7px" width="16.9" height="16.9"><path d="M8.44,2.0 L14.879999999999999,8.44 L8.44,14.879999999999999 L2.0,8.44Z" fill="#6363c7" stroke="#1c1c1c" stroke-width="1"/></svg><div style="position:absolute;left:2183.4px;top:1579.5px;line-height:19.3px;font-family:'Liberation Sans', sans-serif;font-size:14.834999999999999px;color:#e6e6e6;white-space:nowrap;text-shadow:0 1px 1.2px rgba(0,0,0,0.7);">Offset</div><svg style="position:absolute;left:2162.0px;top:1608.6px" width="16.9" height="16.9"><path d="M8.44,2.0 L14.879999999999999,8.44 L8.44,14.879999999999999 L2.0,8.44Z" fill="#a1a1a1" stroke="#1c1c1c" stroke-width="1"/><circle cx="8.44" cy="8.44" r="1.6" fill="#1c1c1c"/></svg><div style="position:absolute;left:2182.9px;top:1605.2px;width:150.4px;height:23.5px;background:#545454;border-radius:4.6px;"></div><div style="position:absolute;left:2202.9px;top:1607.4px;line-height:19.3px;font-family:'Liberation Sans', sans-serif;font-size:14.834999999999999px;color:#e6e6e6;white-space:nowrap;text-shadow:0 1px 1.2px rgba(0,0,0,0.7);">Offset S...</div><div style="position:absolute;right:658.5px;top:1607.4px;line-height:19.3px;font-family:'Liberation Sans', sans-serif;font-size:14.834999999999999px;color:#e6e6e6;white-space:nowrap;text-shadow:0 1px 1.2px rgba(0,0,0,0.7);">0.020</div><svg style="position:absolute;left:2163.6px;top:1637.4px" width="13.6" height="13.6"><circle cx="6.8" cy="6.8" r="5.6" fill="#cca6d6" stroke="#1c1c1c" stroke-width="1.2"/></svg><div style="position:absolute;left:2183.4px;top:1636.4px;width:15.5px;height:15.5px;background:#545454;border-radius:3.4499999999999997px;"></div><div style="position:absolute;left:2204.1px;top:1634.6px;line-height:19.3px;font-family:'Liberation Sans', sans-serif;font-size:14.834999999999999px;color:#e6e6e6;white-space:nowrap;text-shadow:0 1px 1.2px rgba(0,0,0,0.7);">Individual</div><div style="position:absolute;left:2398.3px;top:1379.7px;width:179.9px;height:182.8px;background:#303030;border-radius:5.75px;box-shadow:0 2.3px 6.8999999999999995px rgba(0,0,0,0.45);"></div><div style="position:absolute;left:2398.3px;top:1379.7px;width:179.9px;height:26.6px;background:#1f6e5c;border-radius:5.75px 5.75px 0 0"></div><div style="position:absolute;left:2396.5px;top:1377.9px;width:179.9px;height:182.8px;border:1.8px solid #e8e8e8;border-radius:7.55px"></div><svg style="position:absolute;left:2412.1px;top:1390.2px" width="12.3" height="7.7"><path d="M1,1 L6.2,6.7 L11.3,1" fill="none" stroke="#d0d0d0" stroke-width="1.4"/></svg><div style="position:absolute;left:2429.9px;top:1383.4px;line-height:19.3px;font-family:'Liberation Sans', sans-serif;font-size:14.834999999999999px;color:#e6e6e6;white-space:nowrap;text-shadow:0 1px 1.2px rgba(0,0,0,0.7);">Set Shade Smooth</div><div style="position:absolute;right:412.1px;top:1414.7px;line-height:19.3px;font-family:'Liberation Sans', sans-serif;font-size:14.834999999999999px;color:#e6e6e6;white-space:nowrap;text-shadow:0 1px 1.2px rgba(0,0,0,0.7);">Geometry</div><svg style="position:absolute;left:2571.4px;top:1417.5px" width="13.6" height="13.6"><circle cx="6.8" cy="6.8" r="5.6" fill="#00d6a3" stroke="#1c1c1c" stroke-width="1.2"/></svg><svg style="position:absolute;left:2391.5px;top:1481.0px" width="13.6" height="13.6"><circle cx="6.8" cy="6.8" r="5.6" fill="#00d6a3" stroke="#1c1c1c" stroke-width="1.2"/></svg><div style="position:absolute;left:2412.3px;top:1478.2px;line-height:19.3px;font-family:'Liberation Sans', sans-serif;font-size:14.834999999999999px;color:#e6e6e6;white-space:nowrap;text-shadow:0 1px 1.2px rgba(0,0,0,0.7);">Geometry</div><svg style="position:absolute;left:2389.9px;top:1506.6px" width="16.9" height="16.9"><path d="M8.44,2.0 L14.879999999999999,8.44 L8.44,14.879999999999999 L2.0,8.44Z" fill="#cca6d6" stroke="#1c1c1c" stroke-width="1"/><circle cx="8.44" cy="8.44" r="1.6" fill="#1c1c1c"/></svg><div style="position:absolute;left:2412.3px;top:1505.4px;line-height:19.3px;font-family:'Liberation Sans', sans-serif;font-size:14.834999999999999px;color:#e6e6e6;white-space:nowrap;text-shadow:0 1px 1.2px rgba(0,0,0,0.7);">Selection</div><svg style="position:absolute;left:2389.9px;top:1534.4px" width="16.9" height="16.9"><path d="M8.44,2.0 L14.879999999999999,8.44 L8.44,14.879999999999999 L2.0,8.44Z" fill="#cca6d6" stroke="#1c1c1c" stroke-width="1"/><circle cx="8.44" cy="8.44" r="1.6" fill="#1c1c1c"/></svg><div style="position:absolute;left:2412.3px;top:1535.0px;width:15.5px;height:15.5px;background:#4772b3;border-radius:3.4499999999999997px;"></div><svg style="position:absolute;left:2412.3px;top:1535.0375px" width="15.524999999999999" height="15.524999999999999" viewBox="0 0 18 18"><path d="M3.8,9.4 L7.4,12.8 L14.2,4.8" fill="none" stroke="#fff" stroke-width="2.4" stroke-linecap="round" stroke-linejoin="round"/></svg><div style="position:absolute;left:2433.0px;top:1533.2px;line-height:19.3px;font-family:'Liberation Sans', sans-serif;font-size:14.834999999999999px;color:#e6e6e6;white-space:nowrap;text-shadow:0 1px 1.2px rgba(0,0,0,0.7);">Shade Smooth</div><div style="position:absolute;left:2412.0px;top:1447.8px;width:151.0px;height:23.4px;background:#545454;border-radius:4px;"></div><div style="position:absolute;left:2412px;top:1447.8px;width:75.4px;height:23.4px;background:#4772b3;border-radius:4px 0 0 4px"></div><div style="position:absolute;left:2449.7px;top:1450.1px;line-height:18.7px;font-family:'Liberation Sans', sans-serif;font-size:14.4px;color:#e6e6e6;white-space:nowrap;text-shadow:0 1px 1.2px rgba(0,0,0,0.7);transform:translateX(-50%)">Edge</div><div style="position:absolute;left:2525.0px;top:1450.1px;line-height:18.7px;font-family:'Liberation Sans', sans-serif;font-size:14.4px;color:#e6e6e6;white-space:nowrap;text-shadow:0 1px 1.2px rgba(0,0,0,0.7);transform:translateX(-50%)">Face</div><div style="position:absolute;left:2628.3px;top:1407.5px;width:178.7px;height:91.3px;background:#303030;border-radius:5.75px;box-shadow:0 2.3px 6.8999999999999995px rgba(0,0,0,0.45);"></div><div style="position:absolute;left:2628.3px;top:1407.5px;width:178.7px;height:27.5px;background:#232323;border-radius:5.75px 5.75px 0 0"></div><svg style="position:absolute;left:2642.1px;top:1418.4px" width="12.3" height="7.7"><path d="M1,1 L6.2,6.7 L11.3,1" fill="none" stroke="#d0d0d0" stroke-width="1.4"/></svg><div style="position:absolute;left:2659.9px;top:1411.6px;line-height:19.3px;font-family:'Liberation Sans', sans-serif;font-size:14.834999999999999px;color:#e6e6e6;white-space:nowrap;text-shadow:0 1px 1.2px rgba(0,0,0,0.7);">Group Output</div><svg style="position:absolute;left:2621.5px;top:1444.9px" width="13.6" height="13.6"><circle cx="6.8" cy="6.8" r="5.6" fill="#00d6a3" stroke="#1c1c1c" stroke-width="1.2"/></svg><div style="position:absolute;left:2642.3px;top:1442.1px;line-height:19.3px;font-family:'Liberation Sans', sans-serif;font-size:14.834999999999999px;color:#e6e6e6;white-space:nowrap;text-shadow:0 1px 1.2px rgba(0,0,0,0.7);">Geometry</div><svg style="position:absolute;left:2622.0px;top:1473.3px" width="12.7" height="12.7"><circle cx="6.3" cy="6.3" r="4.7" fill="none" stroke="#7a7a7a" stroke-width="1.5"/></svg><div style="position:absolute;left:0;top:1388px;width:1666.5px;height:359px;overflow:hidden"><div style="position:absolute;left:0;top:-1388px;width:2974px;height:1747px"><div style="position:absolute;left:-10px;top:1388px;width:1676.5px;height:369px;background-color:#1d1d1d;border-radius:6px;box-shadow:inset 0 0 0 1px #2c2c2c;background-image:radial-gradient(circle at 1.5px 1.5px,#232323 1.3px,transparent 2px);background-size:38.9px 38.9px;background-position:21.799999999999955px 33.2px;overflow:hidden"></div><svg style="position:absolute;left:0;top:0" width="2974" height="1747"><path d="M343.6,1450 L511.5,1470" stroke="#a9b8c6" stroke-width="5"/><path d="M960,1405 C1010,1440 1040,1461 1083.9,1461.3" fill="none" stroke="#6a62c9" stroke-width="5"/></svg><div style="position:absolute;left:-10.0px;top:1419.0px;width:355.0px;height:340.0px;background:#303030;border-radius:8px;"></div><div style="position:absolute;left:-10.0px;top:1419.0px;width:355.0px;height:4.5px;background:#83304a;border-radius:0px;"></div><div style="position:absolute;left:343.5px;top:1419px;width:2.2px;height:330px;background:#e5761d"></div><div style="position:absolute;left:-2.0px;top:1435.8px;line-height:19.5px;font-family:'Liberation Sans', sans-serif;font-size:15px;color:#e6e6e6;white-space:nowrap;text-shadow:0 1px 1.2px rgba(0,0,0,0.7);">orld_Daylight_Environment</div><div style="position:absolute;right:2650.8px;top:1435.7px;line-height:28.6px;font-family:'Liberation Sans', sans-serif;font-size:22px;color:#e6e6e6;white-space:nowrap;text-shadow:0 1px 2px rgba(0,0,0,0.7);">Float out</div><svg style="position:absolute;left:331.8px;top:1438.2px" width="23.6" height="23.6"><circle cx="11.8" cy="11.8" r="9.8" fill="#6a8fb8" stroke="#8a8a8a" stroke-width="2.0"/></svg><div style="position:absolute;left:-10.0px;top:1490.0px;width:333.2px;height:36.8px;background:#545454;border-radius:7px;"></div><div style="position:absolute;left:-10px;top:1490px;width:86.8px;height:36.799999999999955px;background:#4772b3;border-radius:7px 0 0 7px"></div><div style="position:absolute;left:7.0px;top:1493.8px;line-height:29.1px;font-family:'Liberation Sans', sans-serif;font-size:22.4px;color:#e6e6e6;white-space:nowrap;text-shadow:0 1px 2px rgba(0,0,0,0.7);">Latitude</div><div style="position:absolute;right:2678.3px;top:1492.8px;line-height:31.2px;font-family:'Liberation Sans', sans-serif;font-size:24px;color:#e6e6e6;white-space:nowrap;text-shadow:0 1px 2px rgba(0,0,0,0.7);letter-spacing:1.2px">-37.04366</div><div style="position:absolute;left:-10.0px;top:1533.2px;width:333.2px;height:37.2px;background:#545454;border-radius:7px;"></div><div style="position:absolute;left:-10px;top:1533.2px;width:329px;height:37.200000000000045px;background:#4772b3;border-radius:7px"></div><div style="position:absolute;left:7.0px;top:1537.2px;line-height:29.1px;font-family:'Liberation Sans', sans-serif;font-size:22.4px;color:#e6e6e6;white-space:nowrap;text-shadow:0 1px 2px rgba(0,0,0,0.7);">Longitude</div><div style="position:absolute;right:2678.3px;top:1536.2px;line-height:31.2px;font-family:'Liberation Sans', sans-serif;font-size:24px;color:#e6e6e6;white-space:nowrap;text-shadow:0 1px 2px rgba(0,0,0,0.7);letter-spacing:1.2px">174.50917</div><div style="position:absolute;left:-10.0px;top:1576.8px;width:333.2px;height:36.4px;background:#545454;border-radius:7px;"></div><div style="position:absolute;left:-10px;top:1576.8px;width:47.5px;height:36.40000000000009px;background:#4772b3;border-radius:7px 0 0 7px"></div><div style="position:absolute;left:7.0px;top:1580.4px;line-height:29.1px;font-family:'Liberation Sans', sans-serif;font-size:22.4px;color:#e6e6e6;white-space:nowrap;text-shadow:0 1px 2px rgba(0,0,0,0.7);">Month</div><div style="position:absolute;right:2678.3px;top:1579.4px;line-height:31.2px;font-family:'Liberation Sans', sans-serif;font-size:24px;color:#e6e6e6;white-space:nowrap;text-shadow:0 1px 2px rgba(0,0,0,0.7);letter-spacing:1.2px">3</div><div style="position:absolute;left:-10.0px;top:1620.4px;width:333.2px;height:36.4px;background:#545454;border-radius:7px;"></div><div style="position:absolute;left:7.0px;top:1624.0px;line-height:29.1px;font-family:'Liberation Sans', sans-serif;font-size:22.4px;color:#e6e6e6;white-space:nowrap;text-shadow:0 1px 2px rgba(0,0,0,0.7);">Day</div><div style="position:absolute;right:2678.3px;top:1623.0px;line-height:31.2px;font-family:'Liberation Sans', sans-serif;font-size:24px;color:#e6e6e6;white-space:nowrap;text-shadow:0 1px 2px rgba(0,0,0,0.7);letter-spacing:1.2px">1</div><div style="position:absolute;left:-10.0px;top:1663.2px;width:333.2px;height:36.8px;background:#545454;border-radius:7px;"></div><div style="position:absolute;left:-10px;top:1663.2px;width:217px;height:36.799999999999955px;background:#4772b3;border-radius:7px 0 0 7px"></div><div style="position:absolute;left:7.0px;top:1667.0px;line-height:29.1px;font-family:'Liberation Sans', sans-serif;font-size:22.4px;color:#e6e6e6;white-space:nowrap;text-shadow:0 1px 2px rgba(0,0,0,0.7);">Local time</div><div style="position:absolute;right:2678.3px;top:1666.0px;line-height:31.2px;font-family:'Liberation Sans', sans-serif;font-size:24px;color:#e6e6e6;white-space:nowrap;text-shadow:0 1px 2px rgba(0,0,0,0.7);letter-spacing:1.2px">16.00</div><div style="position:absolute;left:-10.0px;top:1706.4px;width:333.2px;height:36.5px;background:#545454;border-radius:7px;"></div><div style="position:absolute;left:-10px;top:1706.4px;width:333.2px;height:36.5px;background:#4772b3;border-radius:7px"></div><div style="position:absolute;left:7.0px;top:1710.1px;line-height:29.1px;font-family:'Liberation Sans', sans-serif;font-size:22.4px;color:#e6e6e6;white-space:nowrap;text-shadow:0 1px 2px rgba(0,0,0,0.7);">GMT offset</div><div style="position:absolute;right:2678.3px;top:1709.1px;line-height:31.2px;font-family:'Liberation Sans', sans-serif;font-size:24px;color:#e6e6e6;white-space:nowrap;text-shadow:0 1px 2px rgba(0,0,0,0.7);letter-spacing:1.2px">12</div><div style="position:absolute;left:511.5px;top:1380.0px;width:386.7px;height:380.0px;background:#303030;border-radius:8px;box-shadow:0 3px 10px rgba(0,0,0,0.5);"></div><div style="position:absolute;left:617.8px;top:1400.0px;width:259.5px;height:45.8px;background:#222222;border-radius:7px;box-shadow:inset 0 0 0 1px #393939;"></div><div style="position:absolute;left:531.2px;top:1413.7px;line-height:28.6px;font-family:'Liberation Sans', sans-serif;font-size:22px;color:#e6e6e6;white-space:nowrap;text-shadow:0 1px 2px rgba(0,0,0,0.7);">Comp...</div><div style="position:absolute;left:632.5px;top:1413.0px;line-height:29.9px;font-family:'Liberation Sans', sans-serif;font-size:23px;color:#e6e6e6;white-space:nowrap;text-shadow:0 1px 2px rgba(0,0,0,0.7);">Latest (2022.1)</div><svg style="position:absolute;left:851.0px;top:1424.2px" width="16.0" height="9.7"><path d="M1,1 L8.0,8.7 L15.0,1" fill="none" stroke="#ddd" stroke-width="2"/></svg><svg style="position:absolute;left:499.7px;top:1458.2px" width="23.6" height="23.6"><circle cx="11.8" cy="11.8" r="9.8" fill="#6a8fb8" stroke="#8a8a8a" stroke-width="2.0"/></svg><div style="position:absolute;left:531.2px;top:1455.6px;line-height:28.7px;font-family:'Liberation Sans', sans-serif;font-size:22.1px;color:#e6e6e6;white-space:nowrap;text-shadow:0 1px 2px rgba(0,0,0,0.7);">Sun direction</div><div style="position:absolute;left:531.2px;top:1495.7px;width:345.6px;height:37.4px;background:#545454;border-radius:7px;"></div><div style="position:absolute;left:531.2px;top:1495.7px;width:8.599999999999909px;height:37.399999999999864px;background:#4772b3;border-radius:7px 0 0 7px"></div><div style="position:absolute;left:561.2px;top:1499.7px;line-height:29.4px;font-family:'Liberation Sans', sans-serif;font-size:22.6px;color:#e6e6e6;white-space:nowrap;text-shadow:0 1px 2px rgba(0,0,0,0.7);">Sky turbidity</div><div style="position:absolute;right:2124.3px;top:1499.1px;line-height:30.6px;font-family:'Liberation Sans', sans-serif;font-size:23.5px;color:#e6e6e6;white-space:nowrap;text-shadow:0 1px 2px rgba(0,0,0,0.7);letter-spacing:1px">2.40</div><svg style="position:absolute;left:499.7px;top:1502.6px" width="23.6" height="23.6"><circle cx="11.8" cy="11.8" r="9.8" fill="#6a8fb8" stroke="#8a8a8a" stroke-width="2.0"/></svg><div style="position:absolute;left:531.2px;top:1539.0px;width:345.6px;height:36.7px;background:#545454;border-radius:7px;"></div><div style="position:absolute;left:561.2px;top:1542.7px;line-height:29.4px;font-family:'Liberation Sans', sans-serif;font-size:22.6px;color:#e6e6e6;white-space:nowrap;text-shadow:0 1px 2px rgba(0,0,0,0.7);">Power</div><div style="position:absolute;right:2124.3px;top:1542.1px;line-height:30.6px;font-family:'Liberation Sans', sans-serif;font-size:23.5px;color:#e6e6e6;white-space:nowrap;text-shadow:0 1px 2px rgba(0,0,0,0.7);letter-spacing:1px">1.00</div><svg style="position:absolute;left:499.7px;top:1545.5px" width="23.6" height="23.6"><circle cx="11.8" cy="11.8" r="9.8" fill="#6a8fb8" stroke="#8a8a8a" stroke-width="2.0"/></svg><div style="position:absolute;left:531.2px;top:1582.9px;width:345.6px;height:35.7px;background:#545454;border-radius:7px;"></div><div style="position:absolute;left:561.2px;top:1586.1px;line-height:29.4px;font-family:'Liberation Sans', sans-serif;font-size:22.6px;color:#e6e6e6;white-space:nowrap;text-shadow:0 1px 2px rgba(0,0,0,0.7);">Sun intensity</div><div style="position:absolute;right:2124.3px;top:1585.5px;line-height:30.6px;font-family:'Liberation Sans', sans-serif;font-size:23.5px;color:#e6e6e6;white-space:nowrap;text-shadow:0 1px 2px rgba(0,0,0,0.7);letter-spacing:1px">1.00</div><svg style="position:absolute;left:499.7px;top:1589.0px" width="23.6" height="23.6"><circle cx="11.8" cy="11.8" r="9.8" fill="#6a8fb8" stroke="#8a8a8a" stroke-width="2.0"/></svg><div style="position:absolute;left:531.2px;top:1626.0px;width:345.6px;height:36.5px;background:#545454;border-radius:7px;"></div><div style="position:absolute;left:531.2px;top:1626px;width:171.69999999999993px;height:36.5px;background:#4772b3;border-radius:7px 0 0 7px"></div><div style="position:absolute;left:561.2px;top:1629.6px;line-height:29.4px;font-family:'Liberation Sans', sans-serif;font-size:22.6px;color:#e6e6e6;white-space:nowrap;text-shadow:0 1px 2px rgba(0,0,0,0.7);">North offset</div><div style="position:absolute;right:2124.3px;top:1629.0px;line-height:30.6px;font-family:'Liberation Sans', sans-serif;font-size:23.5px;color:#e6e6e6;white-space:nowrap;text-shadow:0 1px 2px rgba(0,0,0,0.7);letter-spacing:1px">0.00</div><svg style="position:absolute;left:499.7px;top:1632.5px" width="23.6" height="23.6"><circle cx="11.8" cy="11.8" r="9.8" fill="#6a8fb8" stroke="#8a8a8a" stroke-width="2.0"/></svg><svg style="position:absolute;left:499.7px;top:1675.7px" width="23.6" height="23.6"><circle cx="11.8" cy="11.8" r="9.8" fill="#c4c4c4" stroke="#8a8a8a" stroke-width="2.0"/></svg><div style="position:absolute;left:531.2px;top:1673.1px;line-height:28.9px;font-family:'Liberation Sans', sans-serif;font-size:22.2px;color:#e6e6e6;white-space:nowrap;text-shadow:0 1px 2px rgba(0,0,0,0.7);">Daylight model</div><div style="position:absolute;left:711.8px;top:1669.6px;width:165.0px;height:35.8px;background:#222222;border-radius:7px;box-shadow:inset 0 0 0 1px #393939;"></div><div style="position:absolute;left:726.0px;top:1673.1px;line-height:28.9px;font-family:'Liberation Sans', sans-serif;font-size:22.2px;color:#e6e6e6;white-space:nowrap;text-shadow:0 1px 2px rgba(0,0,0,0.7);">Octane Da...</div><svg style="position:absolute;left:857.0px;top:1684.2px" width="16.0" height="9.7"><path d="M1,1 L8.0,8.7 L15.0,1" fill="none" stroke="#ddd" stroke-width="2"/></svg><svg style="position:absolute;left:499.7px;top:1718.6px" width="23.6" height="23.6"><circle cx="11.8" cy="11.8" r="9.8" fill="#9ccfae" stroke="#8a8a8a" stroke-width="2.0"/></svg><div style="position:absolute;left:531.2px;top:1716.0px;line-height:28.9px;font-family:'Liberation Sans', sans-serif;font-size:22.2px;color:#e6e6e6;white-space:nowrap;text-shadow:0 1px 2px rgba(0,0,0,0.7);">Sky color:</div><div style="position:absolute;left:703.6px;top:1713.6px;width:173.2px;height:45.0px;background:#3c8ef6;border-radius:7px;"></div><div style="position:absolute;left:1083.9px;top:1380.0px;width:387.0px;height:152.6px;background:#303030;border-radius:8px;box-shadow:0 3px 10px rgba(0,0,0,0.5);"></div><div style="position:absolute;left:1102.0px;top:1405.0px;width:25.0px;height:25.0px;background:#4772b3;border-radius:4px;"></div><svg style="position:absolute;left:1102px;top:1403px" width="25" height="25" viewBox="0 0 18 18"><path d="M3.8,9.4 L7.4,12.8 L14.2,4.8" fill="none" stroke="#fff" stroke-width="2.4" stroke-linecap="round" stroke-linejoin="round"/></svg><div style="position:absolute;left:1135.0px;top:1405.7px;line-height:28.6px;font-family:'Liberation Sans', sans-serif;font-size:22px;color:#e6e6e6;white-space:nowrap;text-shadow:0 1px 2px rgba(0,0,0,0.7);">Active</div><svg style="position:absolute;left:1072.1px;top:1449.5px" width="23.6" height="23.6"><circle cx="11.8" cy="11.8" r="9.8" fill="#6464c8" stroke="#8a8a8a" stroke-width="2.0"/></svg><div style="position:absolute;left:1103.0px;top:1447.0px;line-height:28.6px;font-family:'Liberation Sans', sans-serif;font-size:22px;color:#e6e6e6;white-space:nowrap;text-shadow:0 1px 2px rgba(0,0,0,0.7);">Environment</div><div style="position:absolute;left:1412.6px;top:1443.0px;width:37.5px;height:36.5px;background:#545454;border-radius:5.28px;"></div><svg style="position:absolute;left:1412.6px;top:1443.0px" width="37.5" height="36.5"><path d="M18.8,9.1V27.4M10.1,18.2H27.4" stroke="#e8e8e8" stroke-width="2.3"/></svg><svg style="position:absolute;left:1072.1px;top:1492.5px" width="23.6" height="23.6"><circle cx="11.8" cy="11.8" r="9.8" fill="#6464c8" stroke="#8a8a8a" stroke-width="2.0"/></svg><div style="position:absolute;left:1103.0px;top:1490.0px;line-height:28.6px;font-family:'Liberation Sans', sans-serif;font-size:22px;color:#e6e6e6;white-space:nowrap;text-shadow:0 1px 2px rgba(0,0,0,0.7);">Visible Environment</div><div style="position:absolute;left:1412.6px;top:1487.0px;width:37.5px;height:36.5px;background:#545454;border-radius:5.28px;"></div><svg style="position:absolute;left:1412.6px;top:1487.0px" width="37.5" height="36.5"><path d="M18.8,9.1V27.4M10.1,18.2H27.4" stroke="#e8e8e8" stroke-width="2.3"/></svg><div style="position:absolute;left:0;top:1388px;width:1666.5px;height:31.2px;background:#1d1d1d;border-radius:0 6px 0 0;box-shadow:inset -1px 1px 0 #2c2c2c"></div><div style="position:absolute;left:10.0px;top:1394.1px;line-height:18.7px;font-family:'Liberation Sans', sans-serif;font-size:14.4px;color:#e6e6e6;white-space:nowrap;text-shadow:0 1px 1.2px rgba(0,0,0,0.7);">View</div><div style="position:absolute;left:60.0px;top:1394.1px;line-height:18.7px;font-family:'Liberation Sans', sans-serif;font-size:14.4px;color:#e6e6e6;white-space:nowrap;text-shadow:0 1px 1.2px rgba(0,0,0,0.7);">Select</div><div style="position:absolute;left:120.7px;top:1394.1px;line-height:18.7px;font-family:'Liberation Sans', sans-serif;font-size:14.4px;color:#e6e6e6;white-space:nowrap;text-shadow:0 1px 1.2px rgba(0,0,0,0.7);">Add</div><div style="position:absolute;left:165.0px;top:1394.1px;line-height:18.7px;font-family:'Liberation Sans', sans-serif;font-size:14.4px;color:#e6e6e6;white-space:nowrap;text-shadow:0 1px 1.2px rgba(0,0,0,0.7);">Node</div><div style="position:absolute;left:216.0px;top:1395.3px;width:17.4px;height:17.4px;background:#4772b3;border-radius:3px;"></div><svg style="position:absolute;left:216px;top:1395.3px" width="17.4" height="17.4" viewBox="0 0 18 18"><path d="M3.8,9.4 L7.4,12.8 L14.2,4.8" fill="none" stroke="#fff" stroke-width="2.4" stroke-linecap="round" stroke-linejoin="round"/></svg><div style="position:absolute;left:237.0px;top:1394.1px;line-height:18.7px;font-family:'Liberation Sans', sans-serif;font-size:14.4px;color:#e6e6e6;white-space:nowrap;text-shadow:0 1px 1.2px rgba(0,0,0,0.7);">Use Nodes</div><div style="position:absolute;left:557.5px;top:1392.9px;width:317.8px;height:23.3px;background:#282828;border-radius:4px;box-shadow:inset 0 0 0 1px #383838;"></div><div style="position:absolute;left:596.1px;top:1393.4px;width:204.4px;height:22.3px;background:#1f1f1f;border-radius:0px;"></div><div style="position:absolute;left:606.0px;top:1395.1px;line-height:18.7px;font-family:'Liberation Sans', sans-serif;font-size:14.4px;color:#e6e6e6;white-space:nowrap;text-shadow:0 1px 1.2px rgba(0,0,0,0.7);">World_Daylight_Environment</div><div style="position:absolute;left:800.5px;top:1392.9px;width:24.6px;height:23.3px;background:#4772b3;border-radius:0px;"></div><div style="position:absolute;left:825.1px;top:1392.9px;width:50.2px;height:23.3px;background:#3a3a3a;border-radius:0px;border-radius:0 4px 4px 0;"></div><svg style="position:absolute;left:560px;top:1394px" width="40" height="20"><circle cx="10" cy="10" r="7.5" fill="none" stroke="#ddd" stroke-width="1.5"/><path d="M5,5 C8,7 7,10 10,11 C12,12 11,15 9,17 M13,3 C12,6 15,7 17,8" fill="none" stroke="#ddd" stroke-width="1.6"/><path d="M25,9 L28,12 L31,9" fill="none" stroke="#ddd" stroke-width="1.3"/></svg><svg style="position:absolute;left:802px;top:1394px" width="22" height="20"><path d="M10.5,2 L18,4.5 V10 C18,14 14,17 10.5,18.5 C7,17 3,14 3,10 V4.5Z" fill="#fff"/><path d="M6.5,10 L9.5,13 L14.5,7" fill="none" stroke="#4772b3" stroke-width="2"/></svg><svg style="position:absolute;left:826px;top:1394px" width="50" height="20"><rect x="5" y="6" width="9" height="11" fill="none" stroke="#bbb" stroke-width="1.4"/><path d="M8,6 V3 H17 V14 H14" fill="none" stroke="#bbb" stroke-width="1.4"/><path d="M29,5 L38,14 M38,5 L29,14" stroke="#ccc" stroke-width="1.6"/></svg><svg style="position:absolute;left:882px;top:1393px" width="22" height="22"><path d="M12,3 L19,10 L16,11 L12,15 L12,18 L4,10 L7,10 L11,6Z M8,14 L3,19" fill="none" stroke="#aaa" stroke-width="1.4"/></svg><div style="position:absolute;left:1536.5px;top:1392.4px;width:64.0px;height:24.1px;background:#282828;border-radius:4px;box-shadow:inset 0 0 0 1px #383838;"></div><div style="position:absolute;left:1536.5px;top:1392.4px;width:24.3px;height:24.1px;background:#545454;border-radius:4px;"></div><svg style="position:absolute;left:1537px;top:1393px" width="64" height="22"><path d="M6,16 C3,12 4,5 11,5 C17,5 18,11 15,14 L12,17" fill="none" stroke="#bbb" stroke-width="1.6"/><rect x="30" y="4" width="5" height="5" fill="#ddd"/><path d="M37,3V19M31,12H45M30,16H45M40,8V19" stroke="#ccc" stroke-width="1.2"/><path d="M50,9 L53.5,12.5 L57,9" fill="none" stroke="#ddd" stroke-width="1.4"/></svg><div style="position:absolute;left:1607.9px;top:1392.4px;width:48.8px;height:24.1px;background:#282828;border-radius:4px;box-shadow:inset 0 0 0 1px #383838;"></div><div style="position:absolute;left:1607.9px;top:1392.4px;width:23.1px;height:24.1px;background:#4772b3;border-radius:4px;"></div><svg style="position:absolute;left:1608px;top:1393px" width="48" height="23"><circle cx="13.5" cy="9" r="5.5" fill="#fff"/><path d="M7,10 A6,6 0 1 0 14,17" fill="none" stroke="#fff" stroke-width="1.6"/><path d="M31,10 L34.5,13.5 L38,10" fill="none" stroke="#ddd" stroke-width="1.4"/></svg><svg style="position:absolute;left:1656px;top:1438px" width="12" height="16"><path d="M8,2 L3,7.5 L8,13" fill="none" stroke="#aaa" stroke-width="1.4"/></svg><div style="position:absolute;left:1660.0px;top:1465.6px;width:5.0px;height:109.0px;background:#333333;border-radius:2.5px;"></div></div></div><svg style="position:absolute;left:1655px;top:1438px" width="12" height="16"><path d="M8,2 L3,7.5 L8,13" fill="none" stroke="#aaa" stroke-width="1.4"/></svg>
</body></html>
